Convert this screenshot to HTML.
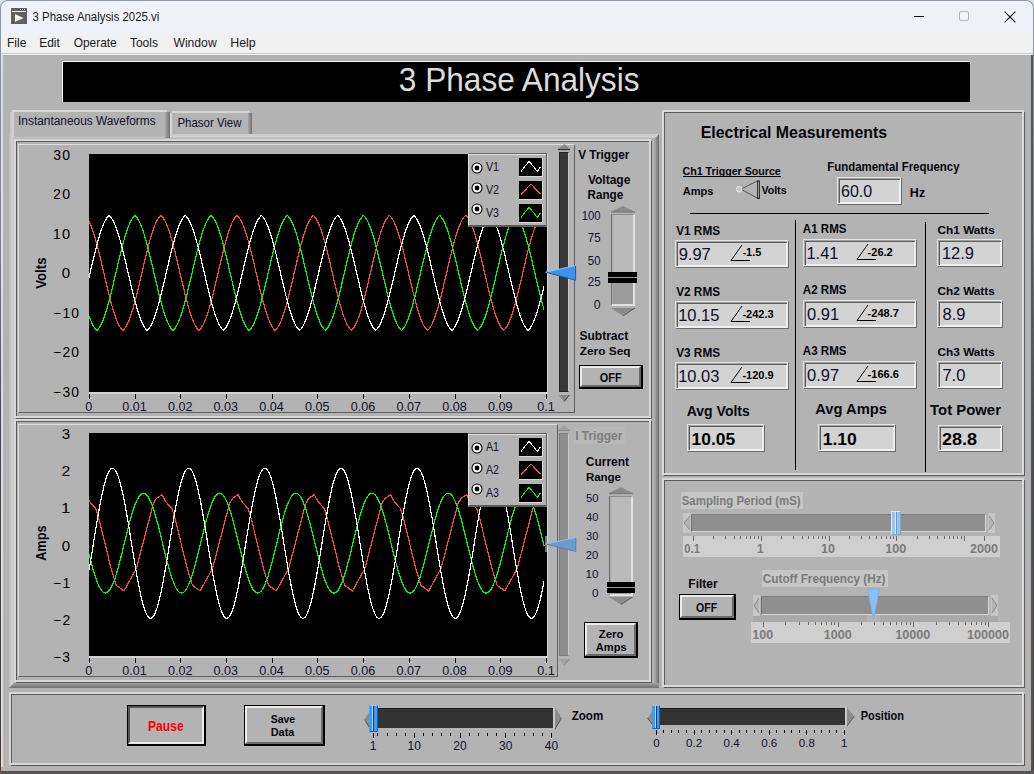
<!DOCTYPE html><html><head><meta charset="utf-8"><style>
html,body{margin:0;padding:0;width:1034px;height:774px;overflow:hidden;background:#6a5646;}
body{position:relative;font-family:"Liberation Sans", sans-serif;}
div{position:absolute;box-sizing:border-box;}
.t{position:absolute;white-space:nowrap;line-height:0;height:0;}
svg{position:absolute;}
</style></head><body><div style="left:0px;top:0px;width:1034px;height:12px;background:#dfe3ea;"></div><div style="left:0px;top:0px;width:1034px;height:773px;background:linear-gradient(#8e98ac 0%,#7a8496 30%,#3c4658 55%,#4a3a30 100%);border-radius:8px 8px 5px 5px;"></div><div style="left:1px;top:1px;width:1032px;height:771px;background:#b3b3b3;border-radius:7px 7px 4px 4px;overflow:hidden;"></div><div style="left:1px;top:1px;width:1032px;height:32px;background:#eff2fa;border-radius:7px 7px 0 0;"></div><div style="left:1px;top:33px;width:1032px;height:20px;background:#f1f1f1;"></div><div style="left:1px;top:53px;width:1032px;height:1px;background:#c4c4c4;"></div><div style="left:1px;top:54px;width:1032px;height:1px;background:#fcfcfc;"></div><div style="left:3px;top:55px;width:1028px;height:1px;background:#ababab;"></div><div style="left:1px;top:55px;width:2px;height:713px;background:#dedede;border-radius:0 0 0 4px;"></div><div style="left:1031px;top:55px;width:2px;height:717px;background:#545454;"></div><div style="left:1px;top:771px;width:1032px;height:2px;background:#545454;border-radius:0 0 4px 4px;"></div><div style="left:1px;top:767px;width:5px;height:4px;background:#b3b3b3;"></div><svg style="left:11px;top:8px" width="16" height="16" viewBox="0 0 16 16">
<rect x="0" y="0" width="16" height="16" fill="#606060"/>
<rect x="1" y="3" width="14" height="1" fill="#f0f0f0"/>
<rect x="9" y="1" width="1" height="1" fill="#f0f0f0"/><rect x="11" y="1" width="1" height="1" fill="#f0f0f0"/><rect x="13" y="1" width="1" height="1" fill="#f0f0f0"/>
<path d="M4 6 L12.5 10 L4 14 Z" fill="#f4f4f4"/>
</svg><div style="left:914px;top:16px;width:10px;height:1px;background:#111;"></div><div style="left:959px;top:11px;width:10px;height:10px;border:1px solid #b4b4b4;border-radius:2px;"></div><svg style="left:1004px;top:11px" width="12" height="12" viewBox="0 0 12 12"><path d="M0.6 0.6 L11.4 11.4 M11.4 0.6 L0.6 11.4" stroke="#111" stroke-width="1.1"/></svg><div style="left:61px;top:60px;width:909px;height:42px;background:#aaaaaa;"></div><div style="left:62px;top:61px;width:908px;height:41px;background:#fafafa;"></div><div style="left:63px;top:62px;width:907px;height:40px;background:#000;"></div><div style="left:9px;top:134px;width:650px;height:554px;background:#b3b3b3;"></div><div style="left:9px;top:134px;width:650px;height:4px;background:linear-gradient(#c8c8c8,#d2d2d2 60%,#c4c4c4);clip-path:polygon(0 0,100% 0,calc(100% - 4px) 100%,0 100%);"></div><div style="left:9px;top:134px;width:5px;height:553px;background:linear-gradient(90deg,#bcbcbc,#d2d2d2 60%,#c4c4c4);"></div><div style="left:654px;top:134px;width:5px;height:553px;background:linear-gradient(90deg,#b0b0b0,#8a8a8a 60%,#666);clip-path:polygon(100% 0,100% 100%,0 100%,0 5px);"></div><div style="left:9px;top:683px;width:650px;height:5px;background:linear-gradient(#a2a2a2,#707070);clip-path:polygon(5px 0,100% 0,100% 100%,0 100%);"></div><div style="left:10px;top:110px;width:160px;height:27px;background:#b3b3b3;border-radius:4px 4px 0 0;"></div><div style="left:12px;top:110px;width:155px;height:2px;background:#d8d8d8;"></div><div style="left:10px;top:112px;width:4px;height:25px;background:linear-gradient(90deg,#c4c4c4,#d4d4d4);"></div><div style="left:165px;top:112px;width:5px;height:26px;background:linear-gradient(90deg,#a8a8a8,#707070);"></div><div style="left:170px;top:111px;width:82px;height:24px;background:#b3b3b3;border-radius:4px 4px 0 0;"></div><div style="left:172px;top:111px;width:77px;height:2px;background:#d6d6d6;"></div><div style="left:170px;top:113px;width:2px;height:21px;background:#d6d6d6;"></div><div style="left:248px;top:113px;width:4px;height:22px;background:linear-gradient(90deg,#a8a8a8,#727272);"></div><div style="left:170px;top:134px;width:489px;height:4px;background:linear-gradient(#c8c8c8,#d2d2d2 60%,#c4c4c4);clip-path:polygon(0 0,100% 0,calc(100% - 4px) 100%,0 100%);"></div><div style="left:16px;top:141px;width:636px;height:278px;border:1px solid #5a5a5a;"></div><div style="left:14px;top:139px;width:637px;height:279px;border:2px solid #d9d9d9;"></div><div style="left:18px;top:144px;width:557px;height:269px;border-top:1px solid #dedede;border-left:1px solid #dedede;border-right:1px solid #5e5e5e;border-bottom:1px solid #5e5e5e;"></div><div style="left:89px;top:154px;width:458px;height:238px;background:#000;"></div><div style="left:89px;top:392px;width:459px;height:2px;background:#d2d2d2;"></div><div style="left:547px;top:154px;width:1px;height:238px;background:#d8d8d8;"></div><div style="left:89px;top:394px;width:1px;height:5px;background:#000;"></div><div style="left:135px;top:394px;width:1px;height:5px;background:#000;"></div><div style="left:180px;top:394px;width:1px;height:5px;background:#000;"></div><div style="left:226px;top:394px;width:1px;height:5px;background:#000;"></div><div style="left:272px;top:394px;width:1px;height:5px;background:#000;"></div><div style="left:317px;top:394px;width:1px;height:5px;background:#000;"></div><div style="left:363px;top:394px;width:1px;height:5px;background:#000;"></div><div style="left:409px;top:394px;width:1px;height:5px;background:#000;"></div><div style="left:455px;top:394px;width:1px;height:5px;background:#000;"></div><div style="left:500px;top:394px;width:1px;height:5px;background:#000;"></div><div style="left:546px;top:394px;width:1px;height:5px;background:#000;"></div><svg style="left:89px;top:154px" width="458" height="238"><polyline fill="none" stroke="#ff4a4a" stroke-width="1.2" shape-rendering="crispEdges" points="0.0,67.29 0.5,68.30 1.0,69.39 1.5,70.54 2.0,71.76 2.5,73.04 3.0,74.38 3.5,75.79 4.0,77.25 4.5,78.77 5.0,80.35 5.5,81.98 6.0,83.65 6.5,85.38 7.0,87.16 7.5,88.97 8.0,90.83 8.5,92.73 9.0,94.67 9.5,96.64 10.0,98.64 10.5,100.66 11.0,102.72 11.5,104.79 12.0,106.89 12.5,109.00 13.0,111.13 13.5,113.27 14.0,115.41 14.5,117.56 15.0,119.71 15.5,121.87 16.0,124.01 16.5,126.15 17.0,128.28 17.5,130.40 18.0,132.50 18.5,134.58 19.0,136.64 19.5,138.67 20.0,140.68 20.5,142.66 21.0,144.60 21.5,146.51 22.0,148.38 22.5,150.21 23.0,151.99 23.5,153.73 24.0,155.42 24.5,157.06 25.0,158.65 25.5,160.18 26.0,161.66 26.5,163.08 27.0,164.44 27.5,165.73 28.0,166.97 28.5,168.14 29.0,169.24 29.5,170.27 30.0,171.24 30.5,172.14 31.0,172.96 31.5,173.72 32.0,174.40 32.5,175.01 33.0,175.55 33.5,176.02 34.0,176.19 34.5,175.75 35.0,175.24 35.5,174.66 36.0,174.01 36.5,173.28 37.0,172.49 37.5,171.62 38.0,170.68 38.5,169.67 39.0,168.60 39.5,167.46 40.0,166.25 40.5,164.98 41.0,163.65 41.5,162.25 42.0,160.80 42.5,159.29 43.0,157.72 43.5,156.10 44.0,154.43 44.5,152.71 45.0,150.95 45.5,149.14 46.0,147.29 46.5,145.39 47.0,143.46 47.5,141.50 48.0,139.51 48.5,137.48 49.0,135.43 49.5,133.36 50.0,131.27 50.5,129.16 51.0,127.03 51.5,124.90 52.0,122.75 52.5,120.60 53.0,118.45 53.5,116.30 54.0,114.15 54.5,112.01 55.0,109.88 55.5,107.76 56.0,105.66 56.5,103.57 57.0,101.51 57.5,99.47 58.0,97.46 58.5,95.48 59.0,93.53 59.5,91.61 60.0,89.74 60.5,87.90 61.0,86.11 61.5,84.36 62.0,82.66 62.5,81.01 63.0,79.42 63.5,77.87 64.0,76.39 64.5,74.96 65.0,73.59 65.5,72.28 66.0,71.04 66.5,69.86 67.0,68.74 67.5,67.70 68.0,66.72 68.5,65.81 69.0,64.97 69.5,64.21 70.0,63.51 70.5,62.89 71.0,62.34 71.5,61.86 72.0,61.55 72.5,61.97 73.0,62.47 73.5,63.03 74.0,63.67 74.5,64.39 75.0,65.17 75.5,66.03 76.0,66.95 76.5,67.95 77.0,69.01 77.5,70.14 78.0,71.34 78.5,72.60 79.0,73.92 79.5,75.30 80.0,76.75 80.5,78.25 81.0,79.81 81.5,81.42 82.0,83.08 82.5,84.79 83.0,86.55 83.5,88.35 84.0,90.20 84.5,92.08 85.0,94.01 85.5,95.96 86.0,97.95 86.5,99.97 87.0,102.02 87.5,104.09 88.0,106.17 88.5,108.28 89.0,110.40 89.5,112.54 90.0,114.68 90.5,116.83 91.0,118.98 91.5,121.13 92.0,123.28 92.5,125.43 93.0,127.56 93.5,129.68 94.0,131.79 94.5,133.87 95.0,135.94 95.5,137.98 96.0,140.00 96.5,141.99 97.0,143.94 97.5,145.86 98.0,147.75 98.5,149.59 99.0,151.39 99.5,153.14 100.0,154.85 100.5,156.51 101.0,158.12 101.5,159.67 102.0,161.16 102.5,162.60 103.0,163.98 103.5,165.30 104.0,166.56 104.5,167.75 105.0,168.87 105.5,169.93 106.0,170.92 106.5,171.84 107.0,172.69 107.5,173.47 108.0,174.18 108.5,174.81 109.0,175.38 109.5,175.87 110.0,176.28 110.5,175.91 111.0,175.42 111.5,174.87 112.0,174.24 112.5,173.54 113.0,172.77 113.5,171.92 114.0,171.01 114.5,170.02 115.0,168.97 115.5,167.85 116.0,166.67 116.5,165.42 117.0,164.11 117.5,162.73 118.0,161.30 118.5,159.81 119.0,158.26 119.5,156.66 120.0,155.01 120.5,153.30 121.0,151.55 121.5,149.76 122.0,147.92 122.5,146.04 123.0,144.12 123.5,142.17 124.0,140.19 124.5,138.17 125.0,136.13 125.5,134.07 126.0,131.98 126.5,129.88 127.0,127.76 127.5,125.63 128.0,123.48 128.5,121.34 129.0,119.18 129.5,117.03 130.0,114.88 130.5,112.74 131.0,110.60 131.5,108.48 132.0,106.37 132.5,104.28 133.0,102.21 133.5,100.16 134.0,98.14 134.5,96.15 135.0,94.19 135.5,92.26 136.0,90.37 136.5,88.52 137.0,86.71 137.5,84.95 138.0,83.24 138.5,81.57 139.0,79.95 139.5,78.39 140.0,76.89 140.5,75.44 141.0,74.05 141.5,72.72 142.0,71.45 142.5,70.25 143.0,69.12 143.5,68.05 144.0,67.04 144.5,66.11 145.0,65.25 145.5,64.46 146.0,63.74 146.5,63.09 147.0,62.52 147.5,62.01 148.0,61.58 148.5,61.82 149.0,62.29 149.5,62.83 150.0,63.45 150.5,64.14 151.0,64.90 151.5,65.73 152.0,66.63 152.5,67.60 153.0,68.64 153.5,69.75 154.0,70.92 154.5,72.16 155.0,73.46 155.5,74.83 156.0,76.25 156.5,77.73 157.0,79.27 157.5,80.86 158.0,82.51 158.5,84.20 159.0,85.94 159.5,87.73 160.0,89.56 160.5,91.44 161.0,93.35 161.5,95.29 162.0,97.27 162.5,99.28 163.0,101.32 163.5,103.38 164.0,105.46 164.5,107.56 165.0,109.68 165.5,111.81 166.0,113.95 166.5,116.10 167.0,118.25 167.5,120.40 168.0,122.55 168.5,124.70 169.0,126.83 169.5,128.96 170.0,131.07 170.5,133.17 171.0,135.24 171.5,137.29 172.0,139.32 172.5,141.32 173.0,143.28 173.5,145.21 174.0,147.11 174.5,148.97 175.0,150.78 175.5,152.55 176.0,154.28 176.5,155.95 177.0,157.58 177.5,159.15 178.0,160.66 178.5,162.12 179.0,163.52 179.5,164.86 180.0,166.14 180.5,167.35 181.0,168.50 181.5,169.58 182.0,170.59 182.5,171.53 183.0,172.41 183.5,173.21 184.0,173.94 184.5,174.60 185.0,175.19 185.5,175.71 186.0,176.15 186.5,176.06 187.0,175.60 187.5,175.07 188.0,174.46 188.5,173.78 189.0,173.04 189.5,172.22 190.0,171.33 190.5,170.37 191.0,169.34 191.5,168.24 192.0,167.08 192.5,165.85 193.0,164.56 193.5,163.21 194.0,161.80 194.5,160.32 195.0,158.79 195.5,157.21 196.0,155.58 196.5,153.89 197.0,152.15 197.5,150.37 198.0,148.55 198.5,146.68 199.0,144.78 199.5,142.84 200.0,140.87 200.5,138.86 201.0,136.83 201.5,134.77 202.0,132.69 202.5,130.59 203.0,128.48 203.5,126.35 204.0,124.21 204.5,122.07 205.0,119.92 205.5,117.76 206.0,115.61 206.5,113.47 207.0,111.33 207.5,109.20 208.0,107.09 208.5,104.99 209.0,102.91 209.5,100.85 210.0,98.82 210.5,96.82 211.0,94.85 211.5,92.91 212.0,91.01 212.5,89.15 213.0,87.32 213.5,85.55 214.0,83.81 214.5,82.13 215.0,80.50 215.5,78.92 216.0,77.39 216.5,75.92 217.0,74.51 217.5,73.16 218.0,71.88 218.5,70.65 219.0,69.49 219.5,68.40 220.0,67.38 220.5,66.42 221.0,65.54 221.5,64.72 222.0,63.97 222.5,63.30 223.0,62.70 223.5,62.18 224.0,61.72 224.5,61.67 225.0,62.12 225.5,62.64 226.0,63.23 226.5,63.90 227.0,64.63 227.5,65.44 228.0,66.32 228.5,67.27 229.0,68.28 229.5,69.37 230.0,70.52 230.5,71.73 231.0,73.01 231.5,74.36 232.0,75.76 232.5,77.22 233.0,78.74 233.5,80.32 234.0,81.94 234.5,83.62 235.0,85.35 235.5,87.12 236.0,88.94 236.5,90.80 237.0,92.69 237.5,94.63 238.0,96.60 238.5,98.60 239.0,100.62 239.5,102.68 240.0,104.75 240.5,106.85 241.0,108.96 241.5,111.09 242.0,113.22 242.5,115.37 243.0,117.52 243.5,119.67 244.0,121.82 244.5,123.97 245.0,126.11 245.5,128.24 246.0,130.36 246.5,132.46 247.0,134.54 247.5,136.60 248.0,138.63 248.5,140.64 249.0,142.62 249.5,144.56 250.0,146.47 250.5,148.34 251.0,150.17 251.5,151.96 252.0,153.70 252.5,155.39 253.0,157.03 253.5,158.62 254.0,160.15 254.5,161.63 255.0,163.05 255.5,164.41 256.0,165.71 256.5,166.94 257.0,168.11 257.5,169.22 258.0,170.25 258.5,171.22 259.0,172.12 259.5,172.95 260.0,173.70 260.5,174.39 261.0,175.00 261.5,175.54 262.0,176.01 262.5,176.19 263.0,175.76 263.5,175.25 264.0,174.67 264.5,174.02 265.0,173.30 265.5,172.50 266.0,171.64 266.5,170.70 267.0,169.70 267.5,168.62 268.0,167.48 268.5,166.28 269.0,165.01 269.5,163.68 270.0,162.28 270.5,160.83 271.0,159.32 271.5,157.76 272.0,156.14 272.5,154.47 273.0,152.75 273.5,150.98 274.0,149.17 274.5,147.32 275.0,145.43 275.5,143.50 276.0,141.54 276.5,139.55 277.0,137.52 277.5,135.47 278.0,133.40 278.5,131.31 279.0,129.20 279.5,127.08 280.0,124.94 280.5,122.80 281.0,120.65 281.5,118.49 282.0,116.34 282.5,114.20 283.0,112.05 283.5,109.92 284.0,107.80 284.5,105.70 285.0,103.61 285.5,101.55 286.0,99.51 286.5,97.50 287.0,95.52 287.5,93.57 288.0,91.65 288.5,89.77 289.0,87.94 289.5,86.15 290.0,84.40 290.5,82.70 291.0,81.05 291.5,79.45 292.0,77.90 292.5,76.42 293.0,74.99 293.5,73.62 294.0,72.31 294.5,71.06 295.0,69.88 295.5,68.77 296.0,67.72 296.5,66.74 297.0,65.83 297.5,64.99 298.0,64.22 298.5,63.52 299.0,62.90 299.5,62.35 300.0,61.87 300.5,61.54 301.0,61.96 301.5,62.45 302.0,63.02 302.5,63.66 303.0,64.37 303.5,65.16 304.0,66.01 304.5,66.94 305.0,67.93 305.5,68.99 306.0,70.12 306.5,71.31 307.0,72.57 307.5,73.89 308.0,75.28 308.5,76.72 309.0,78.22 309.5,79.77 310.0,81.38 310.5,83.04 311.0,84.75 311.5,86.51 312.0,88.31 312.5,90.16 313.0,92.04 313.5,93.97 314.0,95.92 314.5,97.91 315.0,99.93 315.5,101.98 316.0,104.04 316.5,106.13 317.0,108.24 317.5,110.36 318.0,112.50 318.5,114.64 319.0,116.79 319.5,118.94 320.0,121.09 320.5,123.24 321.0,125.38 321.5,127.52 322.0,129.64 322.5,131.74 323.0,133.83 323.5,135.90 324.0,137.94 324.5,139.96 325.0,141.95 325.5,143.90 326.0,145.83 326.5,147.71 327.0,149.55 327.5,151.35 328.0,153.11 328.5,154.82 329.0,156.48 329.5,158.08 330.0,159.64 330.5,161.14 331.0,162.58 331.5,163.96 332.0,165.27 332.5,166.53 333.0,167.72 333.5,168.85 334.0,169.91 334.5,170.90 335.0,171.82 335.5,172.67 336.0,173.45 336.5,174.16 337.0,174.80 337.5,175.37 338.0,175.86 338.5,176.27 339.0,175.92 339.5,175.43 340.0,174.88 340.5,174.25 341.0,173.55 341.5,172.78 342.0,171.94 342.5,171.03 343.0,170.04 343.5,168.99 344.0,167.88 344.5,166.69 345.0,165.45 345.5,164.13 346.0,162.76 346.5,161.33 347.0,159.84 347.5,158.29 348.0,156.69 348.5,155.04 349.0,153.34 349.5,151.59 350.0,149.79 350.5,147.96 351.0,146.08 351.5,144.16 352.0,142.21 352.5,140.23 353.0,138.21 353.5,136.17 354.0,134.11 354.5,132.02 355.0,129.92 355.5,127.80 356.0,125.67 356.5,123.53 357.0,121.38 357.5,119.23 358.0,117.07 358.5,114.92 359.0,112.78 359.5,110.65 360.0,108.52 360.5,106.41 361.0,104.32 361.5,102.25 362.0,100.20 362.5,98.18 363.0,96.19 363.5,94.23 364.0,92.30 364.5,90.41 365.0,88.56 365.5,86.75 366.0,84.99 366.5,83.27 367.0,81.60 367.5,79.99 368.0,78.42 368.5,76.92 369.0,75.47 369.5,74.07 370.0,72.75 370.5,71.48 371.0,70.27 371.5,69.14 372.0,68.07 372.5,67.06 373.0,66.13 373.5,65.27 374.0,64.47 374.5,63.75 375.0,63.10 375.5,62.53 376.0,62.02 376.5,61.59 377.0,61.81 377.5,62.28 378.0,62.82 378.5,63.44 379.0,64.12 379.5,64.88 380.0,65.71 380.5,66.61 381.0,67.58 381.5,68.62 382.0,69.73 382.5,70.90 383.0,72.14 383.5,73.44 384.0,74.80 384.5,76.22 385.0,77.70 385.5,79.24 386.0,80.83 386.5,82.47 387.0,84.17 387.5,85.91 388.0,87.70 388.5,89.53 389.0,91.40 389.5,93.31 390.0,95.25 390.5,97.23 391.0,99.24 391.5,101.28 392.0,103.34 392.5,105.42 393.0,107.52 393.5,109.64 394.0,111.77 394.5,113.91 395.0,116.06 395.5,118.21 396.0,120.36 396.5,122.51 397.0,124.66 397.5,126.79 398.0,128.92 398.5,131.03 399.0,133.12 399.5,135.20 400.0,137.25 400.5,139.28 401.0,141.28 401.5,143.24 402.0,145.18 402.5,147.07 403.0,148.93 403.5,150.75 404.0,152.52 404.5,154.24 405.0,155.92 405.5,157.54 406.0,159.12 406.5,160.63 407.0,162.09 407.5,163.49 408.0,164.83 408.5,166.11 409.0,167.33 409.5,168.47 410.0,169.56 410.5,170.57 411.0,171.52 411.5,172.39 412.0,173.20 412.5,173.93 413.0,174.59 413.5,175.18 414.0,175.70 414.5,176.14 415.0,176.06 415.5,175.61 416.0,175.08 416.5,174.47 417.0,173.80 417.5,173.05 418.0,172.23 418.5,171.34 419.0,170.39 419.5,169.36 420.0,168.26 420.5,167.10 421.0,165.88 421.5,164.59 422.0,163.24 422.5,161.82 423.0,160.35 423.5,158.83 424.0,157.24 424.5,155.61 425.0,153.92 425.5,152.19 426.0,150.41 426.5,148.59 427.0,146.72 427.5,144.82 428.0,142.88 428.5,140.91 429.0,138.90 429.5,136.87 430.0,134.81 430.5,132.74 431.0,130.64 431.5,128.52 432.0,126.39 432.5,124.26 433.0,122.11 433.5,119.96 434.0,117.81 434.5,115.66 435.0,113.51 435.5,111.37 436.0,109.24 436.5,107.13 437.0,105.03 437.5,102.95 438.0,100.90 438.5,98.86 439.0,96.86 439.5,94.89 440.0,92.95 440.5,91.05 441.0,89.18 441.5,87.36 442.0,85.58 442.5,83.85 443.0,82.16 443.5,80.53 444.0,78.95 444.5,77.42 445.0,75.95 445.5,74.54 446.0,73.19 446.5,71.90 447.0,70.68 447.5,69.52 448.0,68.42 448.5,67.40 449.0,66.44 449.5,65.55 450.0,64.73 450.5,63.99 451.0,63.32 451.5,62.71 452.0,62.19 452.5,61.73 453.0,61.67 453.5,62.11 454.0,62.63 454.5,63.22 455.0,63.88"/><polyline fill="none" stroke="#00ff00" stroke-width="1.2" shape-rendering="crispEdges" points="0.0,161.73 0.5,163.15 1.0,164.50 1.5,165.80 2.0,167.03 2.5,168.19 3.0,169.29 3.5,170.32 4.0,171.29 4.5,172.18 5.0,173.00 5.5,173.75 6.0,174.43 6.5,175.04 7.0,175.58 7.5,176.04 8.0,176.17 8.5,175.73 9.0,175.22 9.5,174.63 10.0,173.97 10.5,173.25 11.0,172.45 11.5,171.57 12.0,170.63 12.5,169.62 13.0,168.54 13.5,167.40 14.0,166.19 14.5,164.92 15.0,163.58 15.5,162.18 16.0,160.73 16.5,159.21 17.0,157.65 17.5,156.02 18.0,154.35 18.5,152.63 19.0,150.86 19.5,149.05 20.0,147.19 20.5,145.30 21.0,143.37 21.5,141.40 22.0,139.41 22.5,137.38 23.0,135.33 23.5,133.26 24.0,131.16 24.5,129.05 25.0,126.93 25.5,124.79 26.0,122.65 26.5,120.50 27.0,118.35 27.5,116.19 28.0,114.05 28.5,111.91 29.0,109.77 29.5,107.66 30.0,105.55 30.5,103.47 31.0,101.41 31.5,99.37 32.0,97.36 32.5,95.38 33.0,93.43 33.5,91.52 34.0,89.65 34.5,87.81 35.0,86.02 35.5,84.28 36.0,82.58 36.5,80.93 37.0,79.34 37.5,77.80 38.0,76.31 38.5,74.89 39.0,73.52 39.5,72.22 40.0,70.98 40.5,69.80 41.0,68.69 41.5,67.65 42.0,66.67 42.5,65.77 43.0,64.93 43.5,64.17 44.0,63.48 44.5,62.86 45.0,62.31 45.5,61.84 46.0,61.57 46.5,61.99 47.0,62.49 47.5,63.06 48.0,63.71 48.5,64.43 49.0,65.21 49.5,66.07 50.0,67.00 50.5,68.00 51.0,69.07 51.5,70.20 52.0,71.40 52.5,72.66 53.0,73.99 53.5,75.38 54.0,76.82 54.5,78.32 55.0,79.88 55.5,81.50 56.0,83.16 56.5,84.88 57.0,86.64 57.5,88.44 58.0,90.29 58.5,92.18 59.0,94.10 59.5,96.06 60.0,98.05 60.5,100.07 61.0,102.12 61.5,104.19 62.0,106.28 62.5,108.39 63.0,110.51 63.5,112.64 64.0,114.79 64.5,116.94 65.0,119.09 65.5,121.24 66.0,123.39 66.5,125.53 67.0,127.66 67.5,129.78 68.0,131.89 68.5,133.98 69.0,136.04 69.5,138.09 70.0,140.10 70.5,142.09 71.0,144.04 71.5,145.96 72.0,147.84 72.5,149.68 73.0,151.48 73.5,153.23 74.0,154.93 74.5,156.59 75.0,158.19 75.5,159.74 76.0,161.24 76.5,162.67 77.0,164.05 77.5,165.36 78.0,166.62 78.5,167.80 79.0,168.93 79.5,169.98 80.0,170.97 80.5,171.88 81.0,172.73 81.5,173.51 82.0,174.21 82.5,174.84 83.0,175.40 83.5,175.89 84.0,176.30 84.5,175.89 85.0,175.40 85.5,174.84 86.0,174.21 86.5,173.50 87.0,172.73 87.5,171.88 88.0,170.96 88.5,169.97 89.0,168.92 89.5,167.80 90.0,166.61 90.5,165.36 91.0,164.04 91.5,162.66 92.0,161.23 92.5,159.73 93.0,158.18 93.5,156.58 94.0,154.92 94.5,153.22 95.0,151.47 95.5,149.67 96.0,147.83 96.5,145.95 97.0,144.03 97.5,142.07 98.0,140.09 98.5,138.07 99.0,136.03 99.5,133.97 100.0,131.88 100.5,129.77 101.0,127.65 101.5,125.52 102.0,123.38 102.5,121.23 103.0,119.08 103.5,116.92 104.0,114.78 104.5,112.63 105.0,110.50 105.5,108.37 106.0,106.27 106.5,104.18 107.0,102.11 107.5,100.06 108.0,98.04 108.5,96.05 109.0,94.09 109.5,92.17 110.0,90.28 110.5,88.43 111.0,86.63 111.5,84.87 112.0,83.15 112.5,81.49 113.0,79.88 113.5,78.32 114.0,76.81 114.5,75.37 115.0,73.98 115.5,72.66 116.0,71.39 116.5,70.19 117.0,69.06 117.5,67.99 118.0,67.00 118.5,66.07 119.0,65.21 119.5,64.42 120.0,63.70 120.5,63.06 121.0,62.49 121.5,61.99 122.0,61.56 122.5,61.84 123.0,62.31 123.5,62.86 124.0,63.48 124.5,64.17 125.0,64.94 125.5,65.77 126.0,66.68 126.5,67.65 127.0,68.70 127.5,69.81 128.0,70.98 128.5,72.23 129.0,73.53 129.5,74.90 130.0,76.32 130.5,77.81 131.0,79.35 131.5,80.94 132.0,82.59 132.5,84.29 133.0,86.03 133.5,87.82 134.0,89.66 134.5,91.53 135.0,93.44 135.5,95.39 136.0,97.37 136.5,99.38 137.0,101.42 137.5,103.48 138.0,105.57 138.5,107.67 139.0,109.79 139.5,111.92 140.0,114.06 140.5,116.21 141.0,118.36 141.5,120.51 142.0,122.66 142.5,124.80 143.0,126.94 143.5,129.07 144.0,131.18 144.5,133.27 145.0,135.34 145.5,137.39 146.0,139.42 146.5,141.41 147.0,143.38 147.5,145.31 148.0,147.20 148.5,149.06 149.0,150.87 149.5,152.64 150.0,154.36 150.5,156.03 151.0,157.65 151.5,159.22 152.0,160.74 152.5,162.19 153.0,163.59 153.5,164.92 154.0,166.20 154.5,167.41 155.0,168.55 155.5,169.63 156.0,170.64 156.5,171.58 157.0,172.45 157.5,173.25 158.0,173.98 158.5,174.64 159.0,175.22 159.5,175.73 160.0,176.17 160.5,176.03 161.0,175.57 161.5,175.04 162.0,174.43 162.5,173.75 163.0,173.00 163.5,172.17 164.0,171.28 164.5,170.32 165.0,169.29 165.5,168.19 166.0,167.02 166.5,165.79 167.0,164.50 167.5,163.14 168.0,161.72 168.5,160.25 169.0,158.72 169.5,157.13 170.0,155.49 170.5,153.80 171.0,152.07 171.5,150.28 172.0,148.46 172.5,146.59 173.0,144.68 173.5,142.74 174.0,140.77 174.5,138.76 175.0,136.73 175.5,134.67 176.0,132.59 176.5,130.49 177.0,128.37 177.5,126.25 178.0,124.11 178.5,121.96 179.0,119.81 179.5,117.66 180.0,115.51 180.5,113.36 181.0,111.22 181.5,109.10 182.0,106.98 182.5,104.88 183.0,102.81 183.5,100.75 184.0,98.72 184.5,96.72 185.0,94.75 185.5,92.82 186.0,90.92 186.5,89.05 187.0,87.23 187.5,85.46 188.0,83.73 188.5,82.05 189.0,80.42 189.5,78.84 190.0,77.32 190.5,75.85 191.0,74.45 191.5,73.10 192.0,71.81 192.5,70.59 193.0,69.44 193.5,68.35 194.0,67.33 194.5,66.38 195.0,65.49 195.5,64.68 196.0,63.94 196.5,63.27 197.0,62.67 197.5,62.15 198.0,61.70 198.5,61.69 199.0,62.14 199.5,62.67 200.0,63.26 200.5,63.93 201.0,64.67 201.5,65.48 202.0,66.36 202.5,67.31 203.0,68.33 203.5,69.42 204.0,70.58 204.5,71.80 205.0,73.08 205.5,74.43 206.0,75.83 206.5,77.30 207.0,78.82 207.5,80.39 208.0,82.02 208.5,83.70 209.0,85.43 209.5,87.21 210.0,89.03 210.5,90.89 211.0,92.79 211.5,94.72 212.0,96.69 212.5,98.69 213.0,100.72 213.5,102.78 214.0,104.85 214.5,106.95 215.0,109.06 215.5,111.19 216.0,113.33 216.5,115.48 217.0,117.63 217.5,119.78 218.0,121.93 218.5,124.08 219.0,126.21 219.5,128.34 220.0,130.46 220.5,132.56 221.0,134.64 221.5,136.70 222.0,138.73 222.5,140.74 223.0,142.71 223.5,144.66 224.0,146.56 224.5,148.43 225.0,150.26 225.5,152.04 226.0,153.78 226.5,155.47 227.0,157.11 227.5,158.70 228.0,160.23 228.5,161.70 229.0,163.12 229.5,164.48 230.0,165.77 230.5,167.00 231.0,168.17 231.5,169.27 232.0,170.30 232.5,171.27 233.0,172.16 233.5,172.99 234.0,173.74 234.5,174.42 235.0,175.03 235.5,175.57 236.0,176.03 236.5,176.17 237.0,175.74 237.5,175.23 238.0,174.64 238.5,173.99 239.0,173.26 239.5,172.46 240.0,171.59 240.5,170.65 241.0,169.64 241.5,168.57 242.0,167.42 242.5,166.22 243.0,164.94 243.5,163.61 244.0,162.21 244.5,160.76 245.0,159.24 245.5,157.68 246.0,156.06 246.5,154.38 247.0,152.66 247.5,150.90 248.0,149.08 248.5,147.23 249.0,145.34 249.5,143.41 250.0,141.44 250.5,139.45 251.0,137.42 251.5,135.37 252.0,133.30 252.5,131.21 253.0,129.10 253.5,126.97 254.0,124.83 254.5,122.69 255.0,120.54 255.5,118.39 256.0,116.24 256.5,114.09 257.0,111.95 257.5,109.82 258.0,107.70 258.5,105.60 259.0,103.51 259.5,101.45 260.0,99.41 260.5,97.40 261.0,95.42 261.5,93.47 262.0,91.56 262.5,89.68 263.0,87.85 263.5,86.06 264.0,84.31 264.5,82.61 265.0,80.97 265.5,79.37 266.0,77.83 266.5,76.34 267.0,74.92 267.5,73.55 268.0,72.24 268.5,71.00 269.0,69.82 269.5,68.71 270.0,67.67 270.5,66.69 271.0,65.79 271.5,64.95 272.0,64.18 272.5,63.49 273.0,62.87 273.5,62.32 274.0,61.85 274.5,61.56 275.0,61.98 275.5,62.48 276.0,63.05 276.5,63.69 277.0,64.41 277.5,65.20 278.0,66.05 278.5,66.98 279.0,67.98 279.5,69.05 280.0,70.18 280.5,71.37 281.0,72.64 281.5,73.96 282.0,75.35 282.5,76.79 283.0,78.29 283.5,79.85 284.0,81.46 284.5,83.13 285.0,84.84 285.5,86.60 286.0,88.41 286.5,90.25 287.0,92.14 287.5,94.06 288.0,96.02 288.5,98.01 289.0,100.03 289.5,102.08 290.0,104.15 290.5,106.24 291.0,108.34 291.5,110.47 292.0,112.60 292.5,114.74 293.0,116.89 293.5,119.05 294.0,121.20 294.5,123.35 295.0,125.49 295.5,127.62 296.0,129.74 296.5,131.85 297.0,133.94 297.5,136.00 298.0,138.04 298.5,140.06 299.0,142.05 299.5,144.00 300.0,145.92 300.5,147.80 301.0,149.64 301.5,151.44 302.0,153.19 302.5,154.90 303.0,156.56 303.5,158.16 304.0,159.71 304.5,161.21 305.0,162.64 305.5,164.02 306.0,165.34 306.5,166.59 307.0,167.78 307.5,168.90 308.0,169.96 308.5,170.95 309.0,171.87 309.5,172.71 310.0,173.49 310.5,174.20 311.0,174.83 311.5,175.39 312.0,175.88 312.5,176.29 313.0,175.89 313.5,175.41 314.0,174.85 314.5,174.22 315.0,173.52 315.5,172.74 316.0,171.90 316.5,170.98 317.0,169.99 317.5,168.94 318.0,167.82 318.5,166.63 319.0,165.38 319.5,164.07 320.0,162.69 320.5,161.26 321.0,159.77 321.5,158.22 322.0,156.61 322.5,154.96 323.0,153.25 323.5,151.50 324.0,149.70 324.5,147.86 325.0,145.98 325.5,144.07 326.0,142.11 326.5,140.13 327.0,138.11 327.5,136.07 328.0,134.01 328.5,131.92 329.0,129.82 329.5,127.69 330.0,125.56 330.5,123.42 331.0,121.27 331.5,119.12 332.0,116.97 332.5,114.82 333.0,112.68 333.5,110.54 334.0,108.42 334.5,106.31 335.0,104.22 335.5,102.15 336.0,100.10 336.5,98.08 337.0,96.09 337.5,94.13 338.0,92.20 338.5,90.32 339.0,88.47 339.5,86.66 340.0,84.90 340.5,83.19 341.0,81.52 341.5,79.91 342.0,78.35 342.5,76.84 343.0,75.40 343.5,74.01 344.0,72.68 344.5,71.42 345.0,70.22 345.5,69.08 346.0,68.02 346.5,67.02 347.0,66.09 347.5,65.23 348.0,64.44 348.5,63.72 349.0,63.07 349.5,62.50 350.0,62.00 350.5,61.57 351.0,61.83 351.5,62.30 352.0,62.85 352.5,63.47 353.0,64.16 353.5,64.92 354.0,65.76 354.5,66.66 355.0,67.63 355.5,68.68 356.0,69.78 356.5,70.96 357.0,72.20 357.5,73.50 358.0,74.87 358.5,76.29 359.0,77.78 359.5,79.32 360.0,80.91 360.5,82.56 361.0,84.25 361.5,86.00 362.0,87.79 362.5,89.62 363.0,91.49 363.5,93.40 364.0,95.35 364.5,97.33 365.0,99.34 365.5,101.38 366.0,103.44 366.5,105.52 367.0,107.63 367.5,109.74 368.0,111.87 368.5,114.02 369.0,116.16 369.5,118.31 370.0,120.47 370.5,122.62 371.0,124.76 371.5,126.90 372.0,129.02 372.5,131.13 373.0,133.23 373.5,135.30 374.0,137.35 374.5,139.38 375.0,141.37 375.5,143.34 376.0,145.27 376.5,147.17 377.0,149.02 377.5,150.83 378.0,152.60 378.5,154.33 379.0,156.00 379.5,157.62 380.0,159.19 380.5,160.71 381.0,162.16 381.5,163.56 382.0,164.90 382.5,166.17 383.0,167.38 383.5,168.53 384.0,169.61 384.5,170.62 385.0,171.56 385.5,172.43 386.0,173.23 386.5,173.96 387.0,174.62 387.5,175.21 388.0,175.72 388.5,176.16 389.0,176.04 389.5,175.58 390.0,175.05 390.5,174.44 391.0,173.76 391.5,173.01 392.0,172.19 392.5,171.30 393.0,170.34 393.5,169.31 394.0,168.21 394.5,167.04 395.0,165.81 395.5,164.52 396.0,163.17 396.5,161.75 397.0,160.28 397.5,158.75 398.0,157.16 398.5,155.53 399.0,153.84 399.5,152.10 400.0,150.32 400.5,148.50 401.0,146.63 401.5,144.72 402.0,142.78 402.5,140.81 403.0,138.80 403.5,136.77 404.0,134.71 404.5,132.63 405.0,130.53 405.5,128.42 406.0,126.29 406.5,124.15 407.0,122.00 407.5,119.85 408.0,117.70 408.5,115.55 409.0,113.40 409.5,111.26 410.0,109.14 410.5,107.02 411.0,104.93 411.5,102.85 412.0,100.79 412.5,98.76 413.0,96.76 413.5,94.79 414.0,92.85 414.5,90.95 415.0,89.09 415.5,87.27 416.0,85.49 416.5,83.76 417.0,82.08 417.5,80.45 418.0,78.87 418.5,77.35 419.0,75.88 419.5,74.47 420.0,73.13 420.5,71.84 421.0,70.62 421.5,69.46 422.0,68.37 422.5,67.35 423.0,66.39 423.5,65.51 424.0,64.70 424.5,63.95 425.0,63.28 425.5,62.69 426.0,62.16 426.5,61.71 427.0,61.69 427.5,62.13 428.0,62.66 428.5,63.25 429.0,63.92 429.5,64.65 430.0,65.46 430.5,66.34 431.0,67.29 431.5,68.31 432.0,69.40 432.5,70.55 433.0,71.77 433.5,73.05 434.0,74.40 434.5,75.80 435.0,77.27 435.5,78.79 436.0,80.36 436.5,81.99 437.0,83.67 437.5,85.40 438.0,87.17 438.5,88.99 439.0,90.85 439.5,92.75 440.0,94.69 440.5,96.65 441.0,98.65 441.5,100.68 442.0,102.74 442.5,104.81 443.0,106.91 443.5,109.02 444.0,111.15 444.5,113.29 445.0,115.43 445.5,117.58 446.0,119.73 446.5,121.89 447.0,124.03 447.5,126.17 448.0,128.30 448.5,130.42 449.0,132.52 449.5,134.60 450.0,136.66 450.5,138.69 451.0,140.70 451.5,142.68 452.0,144.62 452.5,146.53 453.0,148.39 453.5,150.22 454.0,152.01 454.5,153.75 455.0,155.44"/><polyline fill="none" stroke="#ffffff" stroke-width="1.2" shape-rendering="crispEdges" points="0.0,123.45 0.5,121.30 1.0,119.15 1.5,117.00 2.0,114.85 2.5,112.70 3.0,110.57 3.5,108.45 4.0,106.34 4.5,104.25 5.0,102.18 5.5,100.13 6.0,98.11 6.5,96.12 7.0,94.16 7.5,92.23 8.0,90.34 8.5,88.49 9.0,86.69 9.5,84.92 10.0,83.21 10.5,81.54 11.0,79.93 11.5,78.37 12.0,76.86 12.5,75.41 13.0,74.03 13.5,72.70 14.0,71.43 14.5,70.23 15.0,69.10 15.5,68.03 16.0,67.03 16.5,66.10 17.0,65.24 17.5,64.45 18.0,63.73 18.5,63.08 19.0,62.51 19.5,62.01 20.0,61.58 20.5,61.82 21.0,62.30 21.5,62.84 22.0,63.46 22.5,64.15 23.0,64.91 23.5,65.74 24.0,66.65 24.5,67.62 25.0,68.66 25.5,69.77 26.0,70.94 26.5,72.18 27.0,73.49 27.5,74.85 28.0,76.27 28.5,77.76 29.0,79.30 29.5,80.89 30.0,82.53 30.5,84.23 31.0,85.97 31.5,87.76 32.0,89.59 32.5,91.47 33.0,93.38 33.5,95.32 34.0,97.30 34.5,99.31 35.0,101.35 35.5,103.41 36.0,105.50 36.5,107.60 37.0,109.71 37.5,111.85 38.0,113.99 38.5,116.13 39.0,118.28 39.5,120.44 40.0,122.59 40.5,124.73 41.0,126.87 41.5,128.99 42.0,131.11 42.5,133.20 43.0,135.27 43.5,137.33 44.0,139.35 44.5,141.35 45.0,143.31 45.5,145.25 46.0,147.14 46.5,149.00 47.0,150.81 47.5,152.58 48.0,154.30 48.5,155.98 49.0,157.60 49.5,159.17 50.0,160.69 50.5,162.14 51.0,163.54 51.5,164.88 52.0,166.16 52.5,167.37 53.0,168.51 53.5,169.59 54.0,170.61 54.5,171.55 55.0,172.42 55.5,173.22 56.0,173.96 56.5,174.61 57.0,175.20 57.5,175.71 58.0,176.16 58.5,176.05 59.0,175.59 59.5,175.06 60.0,174.45 60.5,173.77 61.0,173.02 61.5,172.20 62.0,171.31 62.5,170.35 63.0,169.32 63.5,168.22 64.0,167.06 64.5,165.83 65.0,164.54 65.5,163.19 66.0,161.77 66.5,160.30 67.0,158.77 67.5,157.19 68.0,155.55 68.5,153.86 69.0,152.13 69.5,150.35 70.0,148.52 70.5,146.65 71.0,144.75 71.5,142.81 72.0,140.83 72.5,138.83 73.0,136.80 73.5,134.74 74.0,132.66 74.5,130.56 75.0,128.45 75.5,126.32 76.0,124.18 76.5,122.03 77.0,119.88 77.5,117.73 78.0,115.58 78.5,113.43 79.0,111.29 79.5,109.17 80.0,107.05 80.5,104.96 81.0,102.88 81.5,100.82 82.0,98.79 82.5,96.79 83.0,94.82 83.5,92.88 84.0,90.98 84.5,89.12 85.0,87.30 85.5,85.52 86.0,83.79 86.5,82.10 87.0,80.47 87.5,78.89 88.0,77.37 88.5,75.90 89.0,74.49 89.5,73.14 90.0,71.86 90.5,70.63 91.0,69.48 91.5,68.39 92.0,67.36 92.5,66.41 93.0,65.52 93.5,64.71 94.0,63.96 94.5,63.29 95.0,62.69 95.5,62.17 96.0,61.71 96.5,61.68 97.0,62.13 97.5,62.65 98.0,63.24 98.5,63.91 99.0,64.64 99.5,65.45 100.0,66.33 100.5,67.28 101.0,68.30 101.5,69.38 102.0,70.54 102.5,71.75 103.0,73.04 103.5,74.38 104.0,75.78 104.5,77.25 105.0,78.77 105.5,80.34 106.0,81.97 106.5,83.65 107.0,85.37 107.5,87.15 108.0,88.97 108.5,90.83 109.0,92.72 109.5,94.66 110.0,96.63 110.5,98.63 111.0,100.66 111.5,102.71 112.0,104.78 112.5,106.88 113.0,108.99 113.5,111.12 114.0,113.26 114.5,115.40 115.0,117.55 115.5,119.71 116.0,121.86 116.5,124.00 117.0,126.14 117.5,128.27 118.0,130.39 118.5,132.49 119.0,134.57 119.5,136.63 120.0,138.67 120.5,140.67 121.0,142.65 121.5,144.59 122.0,146.50 122.5,148.37 123.0,150.20 123.5,151.98 124.0,153.72 124.5,155.41 125.0,157.05 125.5,158.64 126.0,160.18 126.5,161.65 127.0,163.07 127.5,164.43 128.0,165.73 128.5,166.96 129.0,168.13 129.5,169.23 130.0,170.27 130.5,171.24 131.0,172.13 131.5,172.96 132.0,173.71 132.5,174.40 133.0,175.01 133.5,175.55 134.0,176.01 134.5,176.19 135.0,175.75 135.5,175.25 136.0,174.67 136.5,174.01 137.0,173.29 137.5,172.49 138.0,171.62 138.5,170.69 139.0,169.68 139.5,168.60 140.0,167.46 140.5,166.26 141.0,164.99 141.5,163.65 142.0,162.26 142.5,160.81 143.0,159.30 143.5,157.73 144.0,156.11 144.5,154.44 145.0,152.72 145.5,150.96 146.0,149.15 146.5,147.29 147.0,145.40 147.5,143.47 148.0,141.51 148.5,139.51 149.0,137.49 149.5,135.44 150.0,133.37 150.5,131.28 151.0,129.17 151.5,127.04 152.0,124.91 152.5,122.76 153.0,120.61 153.5,118.46 154.0,116.31 154.5,114.16 155.0,112.02 155.5,109.89 156.0,107.77 156.5,105.67 157.0,103.58 157.5,101.52 158.0,99.48 158.5,97.47 159.0,95.49 159.5,93.54 160.0,91.62 160.5,89.75 161.0,87.91 161.5,86.12 162.0,84.37 162.5,82.67 163.0,81.02 163.5,79.42 164.0,77.88 164.5,76.39 165.0,74.96 165.5,73.59 166.0,72.29 166.5,71.04 167.0,69.86 167.5,68.75 168.0,67.70 168.5,66.72 169.0,65.81 169.5,64.98 170.0,64.21 170.5,63.51 171.0,62.89 171.5,62.34 172.0,61.86 172.5,61.55 173.0,61.97 173.5,62.46 174.0,63.03 174.5,63.67 175.0,64.38 175.5,65.17 176.0,66.02 176.5,66.95 177.0,67.95 177.5,69.01 178.0,70.14 178.5,71.33 179.0,72.59 179.5,73.92 180.0,75.30 180.5,76.74 181.0,78.24 181.5,79.80 182.0,81.41 182.5,83.07 183.0,84.78 183.5,86.54 184.0,88.34 184.5,90.19 185.0,92.07 185.5,94.00 186.0,95.95 186.5,97.94 187.0,99.96 187.5,102.01 188.0,104.08 188.5,106.17 189.0,108.27 189.5,110.40 190.0,112.53 190.5,114.67 191.0,116.82 191.5,118.97 192.0,121.13 192.5,123.27 193.0,125.42 193.5,127.55 194.0,129.67 194.5,131.78 195.0,133.87 195.5,135.93 196.0,137.98 196.5,139.99 197.0,141.98 197.5,143.94 198.0,145.86 198.5,147.74 199.0,149.58 199.5,151.38 200.0,153.14 200.5,154.84 201.0,156.50 201.5,158.11 202.0,159.66 202.5,161.16 203.0,162.60 203.5,163.98 204.0,165.30 204.5,166.55 205.0,167.74 205.5,168.87 206.0,169.92 206.5,170.91 207.0,171.84 207.5,172.69 208.0,173.47 208.5,174.17 209.0,174.81 209.5,175.37 210.0,175.86 210.5,176.28 211.0,175.91 211.5,175.43 212.0,174.87 212.5,174.24 213.0,173.54 213.5,172.77 214.0,171.93 214.5,171.01 215.0,170.03 215.5,168.98 216.0,167.86 216.5,166.67 217.0,165.43 217.5,164.11 218.0,162.74 218.5,161.31 219.0,159.82 219.5,158.27 220.0,156.67 220.5,155.01 221.0,153.31 221.5,151.56 222.0,149.77 222.5,147.93 223.0,146.05 223.5,144.13 224.0,142.18 224.5,140.20 225.0,138.18 225.5,136.14 226.0,134.08 226.5,131.99 227.0,129.89 227.5,127.77 228.0,125.63 228.5,123.49 229.0,121.34 229.5,119.19 230.0,117.04 230.5,114.89 231.0,112.75 231.5,110.61 232.0,108.49 232.5,106.38 233.0,104.29 233.5,102.22 234.0,100.17 234.5,98.15 235.0,96.16 235.5,94.19 236.0,92.27 236.5,90.38 237.0,88.53 237.5,86.72 238.0,84.96 238.5,83.24 239.0,81.58 239.5,79.96 240.0,78.40 240.5,76.89 241.0,75.44 241.5,74.05 242.0,72.72 242.5,71.46 243.0,70.26 243.5,69.12 244.0,68.05 244.5,67.05 245.0,66.12 245.5,65.25 246.0,64.46 246.5,63.74 247.0,63.09 247.5,62.52 248.0,62.01 248.5,61.58 249.0,61.82 249.5,62.29 250.0,62.83 250.5,63.45 251.0,64.13 251.5,64.89 252.0,65.73 252.5,66.63 253.0,67.60 253.5,68.64 254.0,69.75 254.5,70.92 255.0,72.16 255.5,73.46 256.0,74.82 256.5,76.24 257.0,77.73 257.5,79.26 258.0,80.86 258.5,82.50 259.0,84.20 259.5,85.94 260.0,87.73 260.5,89.56 261.0,91.43 261.5,93.34 262.0,95.29 262.5,97.26 263.0,99.27 263.5,101.31 264.0,103.37 264.5,105.45 265.0,107.55 265.5,109.67 266.0,111.80 266.5,113.94 267.0,116.09 267.5,118.24 268.0,120.39 268.5,122.54 269.0,124.69 269.5,126.83 270.0,128.95 270.5,131.06 271.0,133.16 271.5,135.23 272.0,137.28 272.5,139.31 273.0,141.31 273.5,143.27 274.0,145.21 274.5,147.10 275.0,148.96 275.5,150.77 276.0,152.54 276.5,154.27 277.0,155.94 277.5,157.57 278.0,159.14 278.5,160.66 279.0,162.11 279.5,163.51 280.0,164.85 280.5,166.13 281.0,167.34 281.5,168.49 282.0,169.57 282.5,170.59 283.0,171.53 283.5,172.41 284.0,173.21 284.5,173.94 285.0,174.60 285.5,175.19 286.0,175.71 286.5,176.15 287.0,176.06 287.5,175.60 288.0,175.07 288.5,174.46 289.0,173.79 289.5,173.04 290.0,172.22 290.5,171.33 291.0,170.37 291.5,169.34 292.0,168.25 292.5,167.08 293.0,165.86 293.5,164.57 294.0,163.21 294.5,161.80 295.0,160.33 295.5,158.80 296.0,157.22 296.5,155.58 297.0,153.90 297.5,152.16 298.0,150.38 298.5,148.56 299.0,146.69 299.5,144.79 300.0,142.85 300.5,140.87 301.0,138.87 301.5,136.84 302.0,134.78 302.5,132.70 303.0,130.60 303.5,128.49 304.0,126.36 304.5,124.22 305.0,122.07 305.5,119.92 306.0,117.77 306.5,115.62 307.0,113.48 307.5,111.34 308.0,109.21 308.5,107.09 309.0,105.00 309.5,102.92 310.0,100.86 310.5,98.83 311.0,96.83 311.5,94.86 312.0,92.92 312.5,91.02 313.0,89.15 313.5,87.33 314.0,85.55 314.5,83.82 315.0,82.14 315.5,80.50 316.0,78.92 316.5,77.40 317.0,75.93 317.5,74.52 318.0,73.17 318.5,71.88 319.0,70.66 319.5,69.50 320.0,68.41 320.5,67.38 321.0,66.43 321.5,65.54 322.0,64.72 322.5,63.98 323.0,63.31 323.5,62.70 324.0,62.18 324.5,61.72 325.0,61.67 325.5,62.12 326.0,62.64 326.5,63.23 327.0,63.89 327.5,64.63 328.0,65.44 328.5,66.31 329.0,67.26 329.5,68.28 330.0,69.36 330.5,70.51 331.0,71.73 331.5,73.01 332.0,74.35 332.5,75.75 333.0,77.22 333.5,78.73 334.0,80.31 334.5,81.94 335.0,83.61 335.5,85.34 336.0,87.11 336.5,88.93 337.0,90.79 337.5,92.69 338.0,94.62 338.5,96.59 339.0,98.59 339.5,100.61 340.0,102.67 340.5,104.74 341.0,106.84 341.5,108.95 342.0,111.08 342.5,113.21 343.0,115.36 343.5,117.51 344.0,119.66 344.5,121.81 345.0,123.96 345.5,126.10 346.0,128.23 346.5,130.35 347.0,132.45 347.5,134.53 348.0,136.59 348.5,138.62 349.0,140.63 349.5,142.61 350.0,144.55 350.5,146.46 351.0,148.33 351.5,150.16 352.0,151.95 352.5,153.69 353.0,155.38 353.5,157.02 354.0,158.61 354.5,160.15 355.0,161.63 355.5,163.05 356.0,164.41 356.5,165.70 357.0,166.94 357.5,168.11 358.0,169.21 358.5,170.25 359.0,171.22 359.5,172.12 360.0,172.94 360.5,173.70 361.0,174.39 361.5,175.00 362.0,175.54 362.5,176.01 363.0,176.20 363.5,175.76 364.0,175.26 364.5,174.68 365.0,174.03 365.5,173.30 366.0,172.51 366.5,171.64 367.0,170.70 367.5,169.70 368.0,168.63 368.5,167.49 369.0,166.28 369.5,165.01 370.0,163.68 370.5,162.29 371.0,160.84 371.5,159.33 372.0,157.76 372.5,156.14 373.0,154.48 373.5,152.76 374.0,150.99 374.5,149.18 375.0,147.33 375.5,145.44 376.0,143.51 376.5,141.55 377.0,139.56 377.5,137.53 378.0,135.48 378.5,133.41 379.0,131.32 379.5,129.21 380.0,127.09 380.5,124.95 381.0,122.81 381.5,120.66 382.0,118.50 382.5,116.35 383.0,114.20 383.5,112.06 384.0,109.93 384.5,107.81 385.0,105.71 385.5,103.62 386.0,101.56 386.5,99.52 387.0,97.51 387.5,95.52 388.0,93.57 388.5,91.66 389.0,89.78 389.5,87.95 390.0,86.15 390.5,84.40 391.0,82.70 391.5,81.05 392.0,79.45 392.5,77.91 393.0,76.42 393.5,74.99 394.0,73.62 394.5,72.31 395.0,71.07 395.5,69.89 396.0,68.77 396.5,67.72 397.0,66.74 397.5,65.83 398.0,64.99 398.5,64.22 399.0,63.53 399.5,62.90 400.0,62.35 400.5,61.87 401.0,61.54 401.5,61.96 402.0,62.45 402.5,63.02 403.0,63.66 403.5,64.37 404.0,65.15 404.5,66.01 405.0,66.93 405.5,67.92 406.0,68.99 406.5,70.11 407.0,71.31 407.5,72.57 408.0,73.89 408.5,75.27 409.0,76.71 409.5,78.21 410.0,79.77 410.5,81.38 411.0,83.04 411.5,84.75 412.0,86.50 412.5,88.31 413.0,90.15 413.5,92.04 414.0,93.96 414.5,95.92 415.0,97.90 415.5,99.92 416.0,101.97 416.5,104.03 417.0,106.12 417.5,108.23 418.0,110.35 418.5,112.49 419.0,114.63 419.5,116.78 420.0,118.93 420.5,121.08 421.0,123.23 421.5,125.37 422.0,127.51 422.5,129.63 423.0,131.74 423.5,133.82 424.0,135.89 424.5,137.94 425.0,139.95 425.5,141.94 426.0,143.90 426.5,145.82 427.0,147.70 427.5,149.54 428.0,151.35 428.5,153.10 429.0,154.81 429.5,156.47 430.0,158.08 430.5,159.63 431.0,161.13 431.5,162.57 432.0,163.95 432.5,165.27 433.0,166.53 433.5,167.72 434.0,168.84 434.5,169.90 435.0,170.90 435.5,171.82 436.0,172.67 436.5,173.45 437.0,174.16 437.5,174.80 438.0,175.36 438.5,175.85 439.0,176.27 439.5,175.92 440.0,175.44 440.5,174.88 441.0,174.26 441.5,173.56 442.0,172.79 442.5,171.94 443.0,171.03 443.5,170.05 444.0,169.00 444.5,167.88 445.0,166.70 445.5,165.45 446.0,164.14 446.5,162.77 447.0,161.34 447.5,159.85 448.0,158.30 448.5,156.70 449.0,155.05 449.5,153.35 450.0,151.60 450.5,149.80 451.0,147.96 451.5,146.09 452.0,144.17 452.5,142.22 453.0,140.24 453.5,138.22 454.0,136.18 454.5,134.12 455.0,132.03"/></svg><div style="left:468px;top:153px;width:79px;height:74px;background:#b3b3b3;border-top:1px solid #666;border-left:1px solid #e2e2e2;border-right:1px solid #5a5a5a;border-bottom:2px solid #5a5a5a;"></div><div style="left:469px;top:154px;width:77px;height:1px;background:#e2e2e2;"></div><svg style="left:471px;top:161.8px" width="12" height="12"><circle cx="6" cy="6" r="5" fill="#fff" stroke="#000" stroke-width="1.1"/><circle cx="6" cy="6" r="2.4" fill="#000"/></svg><div style="left:519px;top:158.3px;width:24px;height:19px;background:#000;border-right:1px solid #dadada;border-bottom:1px solid #dadada;"></div><svg style="left:519px;top:158.3px" width="24" height="19"><polyline fill="none" stroke="#ffffff" stroke-width="1" shape-rendering="crispEdges" points="2.1,13.4 10,3.1 18.3,13.4 21.4,9.1"/></svg><svg style="left:471px;top:182.4px" width="12" height="12"><circle cx="6" cy="6" r="5" fill="#fff" stroke="#000" stroke-width="1.1"/><circle cx="6" cy="6" r="2.4" fill="#000"/></svg><div style="left:519px;top:181.20000000000002px;width:24px;height:19px;background:#000;border-right:1px solid #dadada;border-bottom:1px solid #dadada;"></div><svg style="left:519px;top:181.2px" width="24" height="19"><polyline fill="none" stroke="#ff4a4a" stroke-width="1" shape-rendering="crispEdges" points="2.1,13.6 11.9,3.1 21.4,12.9"/></svg><svg style="left:471px;top:203.0px" width="12" height="12"><circle cx="6" cy="6" r="5" fill="#fff" stroke="#000" stroke-width="1.1"/><circle cx="6" cy="6" r="2.4" fill="#000"/></svg><div style="left:519px;top:204.10000000000002px;width:24px;height:19px;background:#000;border-right:1px solid #dadada;border-bottom:1px solid #dadada;"></div><svg style="left:519px;top:204.1px" width="24" height="19"><polyline fill="none" stroke="#00ff00" stroke-width="1" shape-rendering="crispEdges" points="2.1,13.4 10,3.1 18.3,13.4 21.4,9.1"/></svg><svg style="left:558px;top:144px" width="12" height="7"><path d="M6.3 0 L11.8 4.8 L0.2 4.8 Z" fill="#8a8a8a"/><rect x="0" y="4.8" width="12" height="1.4" fill="#3c3c3c"/></svg><div style="left:559px;top:152px;width:10px;height:240px;background:#383838;border:1px solid #222;border-right-color:#c8c8c8;"></div><svg style="left:558px;top:395px" width="12" height="7"><path d="M0.5 0 L11.5 0 L6 6.5 Z" fill="#8a8a8a"/><path d="M6 6.5 L11.5 0" stroke="#3c3c3c" stroke-width="1"/></svg><svg style="left:545.4px;top:264.8px" width="31.600000000000023" height="16.19999999999999"><path d="M0.5 7.199999999999989 L30.600000000000023 0.5 L30.600000000000023 15.199999999999989 Z" fill="#3a92ee"/><path d="M0.5 7.199999999999989 L30.600000000000023 15.199999999999989 L30.600000000000023 0.5" stroke="#1b5cab" stroke-width="1" fill="none"/><path d="M0.5 7.199999999999989 L30.600000000000023 0.5" stroke="#8cc4ff" stroke-width="1" fill="none"/></svg><div style="left:16px;top:421px;width:636px;height:262px;border:1px solid #5a5a5a;"></div><div style="left:14px;top:419px;width:637px;height:263px;border:2px solid #d9d9d9;"></div><div style="left:18px;top:424px;width:540px;height:253px;border-top:1px solid #dedede;border-left:1px solid #dedede;border-right:1px solid #5e5e5e;border-bottom:1px solid #5e5e5e;"></div><div style="left:89px;top:433px;width:458px;height:223px;background:#000;"></div><div style="left:89px;top:656px;width:459px;height:2px;background:#d2d2d2;"></div><div style="left:547px;top:433px;width:1px;height:223px;background:#d8d8d8;"></div><div style="left:89px;top:658px;width:1px;height:5px;background:#000;"></div><div style="left:135px;top:658px;width:1px;height:5px;background:#000;"></div><div style="left:180px;top:658px;width:1px;height:5px;background:#000;"></div><div style="left:226px;top:658px;width:1px;height:5px;background:#000;"></div><div style="left:272px;top:658px;width:1px;height:5px;background:#000;"></div><div style="left:317px;top:658px;width:1px;height:5px;background:#000;"></div><div style="left:363px;top:658px;width:1px;height:5px;background:#000;"></div><div style="left:409px;top:658px;width:1px;height:5px;background:#000;"></div><div style="left:455px;top:658px;width:1px;height:5px;background:#000;"></div><div style="left:500px;top:658px;width:1px;height:5px;background:#000;"></div><div style="left:546px;top:658px;width:1px;height:5px;background:#000;"></div><svg style="left:89px;top:433px" width="458" height="223"><polyline fill="none" stroke="#ff4a4a" stroke-width="1.2" shape-rendering="crispEdges" points="0.0,67.57 0.5,68.47 1.0,69.12 1.5,69.68 2.0,70.25 2.5,70.81 3.0,71.38 3.5,71.94 4.0,72.50 4.5,73.07 5.0,73.63 5.5,74.20 6.0,74.76 6.5,75.33 7.0,76.25 7.5,77.88 8.0,79.51 8.5,81.14 9.0,82.77 9.5,84.40 10.0,86.09 10.5,88.13 11.0,90.18 11.5,92.23 12.0,94.27 12.5,96.32 13.0,98.36 13.5,100.41 14.0,102.46 14.5,104.50 15.0,106.55 15.5,108.59 16.0,110.64 16.5,112.69 17.0,114.73 17.5,116.78 18.0,118.83 18.5,120.87 19.0,122.92 19.5,124.96 20.0,127.01 20.5,129.06 21.0,131.10 21.5,133.15 22.0,135.06 22.5,136.72 23.0,138.38 23.5,140.04 24.0,141.69 24.5,143.35 25.0,145.01 25.5,146.67 26.0,148.32 26.5,149.98 27.0,151.64 27.5,152.59 28.0,152.95 28.5,153.30 29.0,153.65 29.5,154.01 30.0,154.36 30.5,154.71 31.0,155.07 31.5,155.42 32.0,155.78 32.5,156.13 33.0,156.48 33.5,156.84 34.0,157.19 34.5,157.55 35.0,157.90 35.5,156.99 36.0,156.09 36.5,155.18 37.0,154.27 37.5,153.36 38.0,152.46 38.5,151.55 39.0,150.64 39.5,149.73 40.0,148.83 40.5,147.92 41.0,147.01 41.5,146.11 42.0,145.20 42.5,144.29 43.0,143.38 43.5,142.48 44.0,141.57 44.5,140.66 45.0,139.75 45.5,138.85 46.0,137.94 46.5,137.03 47.0,136.13 47.5,135.02 48.0,133.10 48.5,131.19 49.0,129.27 49.5,127.36 50.0,125.44 50.5,123.53 51.0,121.61 51.5,119.70 52.0,117.78 52.5,115.87 53.0,113.96 53.5,112.04 54.0,110.13 54.5,108.21 55.0,106.30 55.5,104.38 56.0,102.47 56.5,100.55 57.0,98.64 57.5,96.72 58.0,94.81 58.5,92.89 59.0,90.98 59.5,89.06 60.0,87.15 60.5,85.23 61.0,83.32 61.5,81.41 62.0,79.49 62.5,77.58 63.0,75.66 63.5,73.75 64.0,71.83 64.5,70.14 65.0,69.33 65.5,68.53 66.0,67.72 66.5,66.91 67.0,66.11 67.5,65.30 68.0,64.97 68.5,64.63 69.0,64.30 69.5,63.97 70.0,63.63 70.5,63.30 71.0,62.97 71.5,62.63 72.0,62.30 72.5,61.97 73.0,61.88 73.5,62.78 74.0,63.67 74.5,64.57 75.0,65.47 75.5,66.37 76.0,67.26 76.5,68.16 77.0,68.93 77.5,69.49 78.0,70.05 78.5,70.62 79.0,71.18 79.5,71.75 80.0,72.31 80.5,72.88 81.0,73.44 81.5,74.01 82.0,74.57 82.5,75.14 83.0,75.70 83.5,77.33 84.0,78.96 84.5,80.59 85.0,82.22 85.5,83.85 86.0,85.47 86.5,87.44 87.0,89.48 87.5,91.53 88.0,93.58 88.5,95.62 89.0,97.67 89.5,99.71 90.0,101.76 90.5,103.81 91.0,105.85 91.5,107.90 92.0,109.95 92.5,111.99 93.0,114.04 93.5,116.08 94.0,118.13 94.5,120.18 95.0,122.22 95.5,124.27 96.0,126.32 96.5,128.36 97.0,130.41 97.5,132.45 98.0,134.50 98.5,136.16 99.0,137.81 99.5,139.47 100.0,141.13 100.5,142.79 101.0,144.44 101.5,146.10 102.0,147.76 102.5,149.42 103.0,151.07 103.5,152.47 104.0,152.82 104.5,153.18 105.0,153.53 105.5,153.89 106.0,154.24 106.5,154.59 107.0,154.95 107.5,155.30 108.0,155.66 108.5,156.01 109.0,156.36 109.5,156.72 110.0,157.07 110.5,157.43 111.0,157.78 111.5,157.30 112.0,156.39 112.5,155.49 113.0,154.58 113.5,153.67 114.0,152.76 114.5,151.86 115.0,150.95 115.5,150.04 116.0,149.14 116.5,148.23 117.0,147.32 117.5,146.41 118.0,145.51 118.5,144.60 119.0,143.69 119.5,142.79 120.0,141.88 120.5,140.97 121.0,140.06 121.5,139.16 122.0,138.25 122.5,137.34 123.0,136.43 123.5,135.53 124.0,133.75 124.5,131.84 125.0,129.92 125.5,128.01 126.0,126.09 126.5,124.18 127.0,122.27 127.5,120.35 128.0,118.44 128.5,116.52 129.0,114.61 129.5,112.69 130.0,110.78 130.5,108.86 131.0,106.95 131.5,105.03 132.0,103.12 132.5,101.20 133.0,99.29 133.5,97.37 134.0,95.46 134.5,93.54 135.0,91.63 135.5,89.72 136.0,87.80 136.5,85.89 137.0,83.97 137.5,82.06 138.0,80.14 138.5,78.23 139.0,76.31 139.5,74.40 140.0,72.48 140.5,70.57 141.0,69.61 141.5,68.80 142.0,67.99 142.5,67.19 143.0,66.38 143.5,65.57 144.0,65.08 144.5,64.75 145.0,64.41 145.5,64.08 146.0,63.75 146.5,63.41 147.0,63.08 147.5,62.75 148.0,62.41 148.5,62.08 149.0,61.75 149.5,62.47 150.0,63.37 150.5,64.27 151.0,65.16 151.5,66.06 152.0,66.96 152.5,67.86 153.0,68.73 153.5,69.30 154.0,69.86 154.5,70.43 155.0,70.99 155.5,71.56 156.0,72.12 156.5,72.69 157.0,73.25 157.5,73.81 158.0,74.38 158.5,74.94 159.0,75.51 159.5,76.78 160.0,78.40 160.5,80.03 161.0,81.66 161.5,83.29 162.0,84.92 162.5,86.74 163.0,88.79 163.5,90.83 164.0,92.88 164.5,94.93 165.0,96.97 165.5,99.02 166.0,101.06 166.5,103.11 167.0,105.16 167.5,107.20 168.0,109.25 168.5,111.30 169.0,113.34 169.5,115.39 170.0,117.43 170.5,119.48 171.0,121.53 171.5,123.57 172.0,125.62 172.5,127.67 173.0,129.71 173.5,131.76 174.0,133.80 174.5,135.59 175.0,137.25 175.5,138.91 176.0,140.57 176.5,142.22 177.0,143.88 177.5,145.54 178.0,147.20 178.5,148.85 179.0,150.51 179.5,152.17 180.0,152.70 180.5,153.06 181.0,153.41 181.5,153.77 182.0,154.12 182.5,154.47 183.0,154.83 183.5,155.18 184.0,155.54 184.5,155.89 185.0,156.24 185.5,156.60 186.0,156.95 186.5,157.31 187.0,157.66 187.5,157.61 188.0,156.70 188.5,155.80 189.0,154.89 189.5,153.98 190.0,153.07 190.5,152.17 191.0,151.26 191.5,150.35 192.0,149.44 192.5,148.54 193.0,147.63 193.5,146.72 194.0,145.82 194.5,144.91 195.0,144.00 195.5,143.09 196.0,142.19 196.5,141.28 197.0,140.37 197.5,139.46 198.0,138.56 198.5,137.65 199.0,136.74 199.5,135.84 200.0,134.40 200.5,132.49 201.0,130.57 201.5,128.66 202.0,126.75 202.5,124.83 203.0,122.92 203.5,121.00 204.0,119.09 204.5,117.17 205.0,115.26 205.5,113.34 206.0,111.43 206.5,109.51 207.0,107.60 207.5,105.68 208.0,103.77 208.5,101.85 209.0,99.94 209.5,98.02 210.0,96.11 210.5,94.20 211.0,92.28 211.5,90.37 212.0,88.45 212.5,86.54 213.0,84.62 213.5,82.71 214.0,80.79 214.5,78.88 215.0,76.96 215.5,75.05 216.0,73.13 216.5,71.22 217.0,69.88 217.5,69.07 218.0,68.27 218.5,67.46 219.0,66.65 219.5,65.85 220.0,65.19 220.5,64.86 221.0,64.53 221.5,64.19 222.0,63.86 222.5,63.53 223.0,63.19 223.5,62.86 224.0,62.53 224.5,62.19 225.0,61.86 225.5,62.17 226.0,63.06 226.5,63.96 227.0,64.86 227.5,65.76 228.0,66.65 228.5,67.55 229.0,68.45 229.5,69.11 230.0,69.67 230.5,70.24 231.0,70.80 231.5,71.36 232.0,71.93 232.5,72.49 233.0,73.06 233.5,73.62 234.0,74.19 234.5,74.75 235.0,75.32 235.5,76.22 236.0,77.85 236.5,79.48 237.0,81.11 237.5,82.74 238.0,84.37 238.5,86.05 239.0,88.09 239.5,90.14 240.0,92.18 240.5,94.23 241.0,96.28 241.5,98.32 242.0,100.37 242.5,102.42 243.0,104.46 243.5,106.51 244.0,108.55 244.5,110.60 245.0,112.65 245.5,114.69 246.0,116.74 246.5,118.79 247.0,120.83 247.5,122.88 248.0,124.92 248.5,126.97 249.0,129.02 249.5,131.06 250.0,133.11 250.5,135.03 251.0,136.69 251.5,138.35 252.0,140.00 252.5,141.66 253.0,143.32 253.5,144.97 254.0,146.63 254.5,148.29 255.0,149.95 255.5,151.60 256.0,152.58 256.5,152.94 257.0,153.29 257.5,153.65 258.0,154.00 258.5,154.35 259.0,154.71 259.5,155.06 260.0,155.42 260.5,155.77 261.0,156.12 261.5,156.48 262.0,156.83 262.5,157.19 263.0,157.54 263.5,157.89 264.0,157.01 264.5,156.10 265.0,155.20 265.5,154.29 266.0,153.38 266.5,152.47 267.0,151.57 267.5,150.66 268.0,149.75 268.5,148.85 269.0,147.94 269.5,147.03 270.0,146.12 270.5,145.22 271.0,144.31 271.5,143.40 272.0,142.49 272.5,141.59 273.0,140.68 273.5,139.77 274.0,138.87 274.5,137.96 275.0,137.05 275.5,136.14 276.0,135.06 276.5,133.14 277.0,131.23 277.5,129.31 278.0,127.40 278.5,125.48 279.0,123.57 279.5,121.65 280.0,119.74 280.5,117.82 281.0,115.91 281.5,113.99 282.0,112.08 282.5,110.16 283.0,108.25 283.5,106.33 284.0,104.42 284.5,102.51 285.0,100.59 285.5,98.68 286.0,96.76 286.5,94.85 287.0,92.93 287.5,91.02 288.0,89.10 288.5,87.19 289.0,85.27 289.5,83.36 290.0,81.44 290.5,79.53 291.0,77.61 291.5,75.70 292.0,73.78 292.5,71.87 293.0,70.15 293.5,69.35 294.0,68.54 294.5,67.74 295.0,66.93 295.5,66.12 296.0,65.32 296.5,64.97 297.0,64.64 297.5,64.31 298.0,63.97 298.5,63.64 299.0,63.31 299.5,62.97 300.0,62.64 300.5,62.31 301.0,61.97 301.5,61.86 302.0,62.76 302.5,63.66 303.0,64.55 303.5,65.45 304.0,66.35 304.5,67.25 305.0,68.14 305.5,68.91 306.0,69.48 306.5,70.04 307.0,70.61 307.5,71.17 308.0,71.74 308.5,72.30 309.0,72.87 309.5,73.43 310.0,74.00 310.5,74.56 311.0,75.12 311.5,75.69 312.0,77.30 312.5,78.93 313.0,80.55 313.5,82.18 314.0,83.81 314.5,85.44 315.0,87.40 315.5,89.44 316.0,91.49 316.5,93.53 317.0,95.58 317.5,97.63 318.0,99.67 318.5,101.72 319.0,103.77 319.5,105.81 320.0,107.86 320.5,109.90 321.0,111.95 321.5,114.00 322.0,116.04 322.5,118.09 323.0,120.14 323.5,122.18 324.0,124.23 324.5,126.27 325.0,128.32 325.5,130.37 326.0,132.41 326.5,134.46 327.0,136.12 327.5,137.78 328.0,139.44 328.5,141.10 329.0,142.75 329.5,144.41 330.0,146.07 330.5,147.73 331.0,149.38 331.5,151.04 332.0,152.46 332.5,152.82 333.0,153.17 333.5,153.53 334.0,153.88 334.5,154.23 335.0,154.59 335.5,154.94 336.0,155.30 336.5,155.65 337.0,156.00 337.5,156.36 338.0,156.71 338.5,157.06 339.0,157.42 339.5,157.77 340.0,157.32 340.5,156.41 341.0,155.50 341.5,154.60 342.0,153.69 342.5,152.78 343.0,151.88 343.5,150.97 344.0,150.06 344.5,149.15 345.0,148.25 345.5,147.34 346.0,146.43 346.5,145.52 347.0,144.62 347.5,143.71 348.0,142.80 348.5,141.90 349.0,140.99 349.5,140.08 350.0,139.17 350.5,138.27 351.0,137.36 351.5,136.45 352.0,135.55 352.5,133.79 353.0,131.88 353.5,129.96 354.0,128.05 354.5,126.13 355.0,124.22 355.5,122.30 356.0,120.39 356.5,118.47 357.0,116.56 357.5,114.64 358.0,112.73 358.5,110.82 359.0,108.90 359.5,106.99 360.0,105.07 360.5,103.16 361.0,101.24 361.5,99.33 362.0,97.41 362.5,95.50 363.0,93.58 363.5,91.67 364.0,89.75 364.5,87.84 365.0,85.92 365.5,84.01 366.0,82.09 366.5,80.18 367.0,78.27 367.5,76.35 368.0,74.44 368.5,72.52 369.0,70.61 369.5,69.62 370.0,68.82 370.5,68.01 371.0,67.20 371.5,66.40 372.0,65.59 372.5,65.09 373.0,64.75 373.5,64.42 374.0,64.09 374.5,63.75 375.0,63.42 375.5,63.09 376.0,62.75 376.5,62.42 377.0,62.09 377.5,61.75 378.0,62.45 378.5,63.35 379.0,64.25 379.5,65.15 380.0,66.04 380.5,66.94 381.0,67.84 381.5,68.72 382.0,69.29 382.5,69.85 383.0,70.42 383.5,70.98 384.0,71.55 384.5,72.11 385.0,72.67 385.5,73.24 386.0,73.80 386.5,74.37 387.0,74.93 387.5,75.50 388.0,76.74 388.5,78.37 389.0,80.00 389.5,81.63 390.0,83.26 390.5,84.89 391.0,86.70 391.5,88.75 392.0,90.79 392.5,92.84 393.0,94.89 393.5,96.93 394.0,98.98 394.5,101.02 395.0,103.07 395.5,105.12 396.0,107.16 396.5,109.21 397.0,111.25 397.5,113.30 398.0,115.35 398.5,117.39 399.0,119.44 399.5,121.49 400.0,123.53 400.5,125.58 401.0,127.62 401.5,129.67 402.0,131.72 402.5,133.76 403.0,135.56 403.5,137.22 404.0,138.88 404.5,140.53 405.0,142.19 405.5,143.85 406.0,145.51 406.5,147.16 407.0,148.82 407.5,150.48 408.0,152.13 408.5,152.70 409.0,153.05 409.5,153.41 410.0,153.76 410.5,154.11 411.0,154.47 411.5,154.82 412.0,155.17 412.5,155.53 413.0,155.88 413.5,156.24 414.0,156.59 414.5,156.94 415.0,157.30 415.5,157.65 416.0,157.63 416.5,156.72 417.0,155.81 417.5,154.91 418.0,154.00 418.5,153.09 419.0,152.18 419.5,151.28 420.0,150.37 420.5,149.46 421.0,148.56 421.5,147.65 422.0,146.74 422.5,145.83 423.0,144.93 423.5,144.02 424.0,143.11 424.5,142.20 425.0,141.30 425.5,140.39 426.0,139.48 426.5,138.58 427.0,137.67 427.5,136.76 428.0,135.85 428.5,134.44 429.0,132.53 429.5,130.61 430.0,128.70 430.5,126.78 431.0,124.87 431.5,122.95 432.0,121.04 432.5,119.12 433.0,117.21 433.5,115.30 434.0,113.38 434.5,111.47 435.0,109.55 435.5,107.64 436.0,105.72 436.5,103.81 437.0,101.89 437.5,99.98 438.0,98.06 438.5,96.15 439.0,94.23 439.5,92.32 440.0,90.40 440.5,88.49 441.0,86.58 441.5,84.66 442.0,82.75 442.5,80.83 443.0,78.92 443.5,77.00 444.0,75.09 444.5,73.17 445.0,71.26 445.5,69.90 446.0,69.09 446.5,68.28 447.0,67.48 447.5,66.67 448.0,65.86 448.5,65.20 449.0,64.87 449.5,64.53 450.0,64.20 450.5,63.87 451.0,63.53 451.5,63.20 452.0,62.87 452.5,62.53 453.0,62.20 453.5,61.87 454.0,62.15 454.5,63.05 455.0,63.94"/><polyline fill="none" stroke="#00ff00" stroke-width="1.2" shape-rendering="crispEdges" points="0.0,120.90 0.5,122.90 1.0,124.88 1.5,126.83 2.0,128.75 2.5,130.65 3.0,132.50 3.5,134.32 4.0,136.10 4.5,137.84 5.0,139.52 5.5,141.16 6.0,142.74 6.5,144.27 7.0,145.74 7.5,147.15 8.0,148.50 8.5,149.78 9.0,150.99 9.5,152.14 10.0,153.21 10.5,154.21 11.0,155.13 11.5,155.98 12.0,156.75 12.5,157.44 13.0,158.05 13.5,158.58 14.0,159.03 14.5,159.39 15.0,159.67 15.5,159.86 16.0,159.97 16.5,160.00 17.0,159.94 17.5,159.79 18.0,159.56 18.5,159.25 19.0,158.85 19.5,158.37 20.0,157.81 20.5,157.17 21.0,156.45 21.5,155.65 22.0,154.77 22.5,153.81 23.0,152.78 23.5,151.68 24.0,150.51 24.5,149.26 25.0,147.96 25.5,146.58 26.0,145.15 26.5,143.65 27.0,142.10 27.5,140.50 28.0,138.84 28.5,137.13 29.0,135.38 29.5,133.58 30.0,131.75 30.5,129.88 31.0,127.97 31.5,126.03 32.0,124.07 32.5,122.08 33.0,120.08 33.5,118.05 34.0,116.01 34.5,113.97 35.0,111.91 35.5,109.85 36.0,107.80 36.5,105.74 37.0,103.70 37.5,101.66 38.0,99.64 38.5,97.64 39.0,95.66 39.5,93.70 40.0,91.77 40.5,89.87 41.0,88.01 41.5,86.18 42.0,84.40 42.5,82.66 43.0,80.96 43.5,79.31 44.0,77.72 44.5,76.18 45.0,74.70 45.5,73.28 46.0,71.93 46.5,70.63 47.0,69.41 47.5,68.25 48.0,67.17 48.5,66.15 49.0,65.22 49.5,64.36 50.0,63.57 50.5,62.87 51.0,62.25 51.5,61.70 52.0,61.24 52.5,60.87 53.0,60.57 53.5,60.36 54.0,60.24 54.5,60.20 55.0,60.25 55.5,60.38 56.0,60.59 56.5,60.89 57.0,61.27 57.5,61.74 58.0,62.29 58.5,62.91 59.0,63.62 59.5,64.41 60.0,65.28 60.5,66.22 61.0,67.24 61.5,68.33 62.0,69.49 62.5,70.72 63.0,72.02 63.5,73.38 64.0,74.80 64.5,76.29 65.0,77.83 65.5,79.43 66.0,81.08 66.5,82.77 67.0,84.52 67.5,86.31 68.0,88.14 68.5,90.00 69.0,91.90 69.5,93.83 70.0,95.79 70.5,97.78 71.0,99.78 71.5,101.80 72.0,103.84 72.5,105.89 73.0,107.94 73.5,110.00 74.0,112.05 74.5,114.11 75.0,116.16 75.5,118.19 76.0,120.22 76.5,122.22 77.0,124.21 77.5,126.17 78.0,128.10 78.5,130.01 79.0,131.88 79.5,133.71 80.0,135.50 80.5,137.25 81.0,138.95 81.5,140.61 82.0,142.21 82.5,143.76 83.0,145.25 83.5,146.68 84.0,148.05 84.5,149.35 85.0,150.59 85.5,151.76 86.0,152.85 86.5,153.88 87.0,154.83 87.5,155.70 88.0,156.50 88.5,157.22 89.0,157.85 89.5,158.41 90.0,158.88 90.5,159.28 91.0,159.58 91.5,159.81 92.0,159.95 92.5,160.00 93.0,159.97 93.5,159.85 94.0,159.65 94.5,159.37 95.0,159.00 95.5,158.55 96.0,158.01 96.5,157.40 97.0,156.70 97.5,155.93 98.0,155.07 98.5,154.14 99.0,153.14 99.5,152.06 100.0,150.91 100.5,149.69 101.0,148.41 101.5,147.06 102.0,145.64 102.5,144.17 103.0,142.64 103.5,141.05 104.0,139.41 104.5,137.72 105.0,135.98 105.5,134.20 106.0,132.38 106.5,130.52 107.0,128.62 107.5,126.70 108.0,124.74 108.5,122.76 109.0,120.76 109.5,118.74 110.0,116.71 110.5,114.66 111.0,112.61 111.5,110.55 112.0,108.50 112.5,106.44 113.0,104.39 113.5,102.35 114.0,100.33 114.5,98.32 115.0,96.33 115.5,94.36 116.0,92.42 116.5,90.51 117.0,88.64 117.5,86.80 118.0,85.00 118.5,83.24 119.0,81.53 119.5,79.87 120.0,78.26 120.5,76.70 121.0,75.20 121.5,73.76 122.0,72.38 122.5,71.07 123.0,69.82 123.5,68.64 124.0,67.53 124.5,66.49 125.0,65.53 125.5,64.64 126.0,63.83 126.5,63.10 127.0,62.45 127.5,61.88 128.0,61.39 128.5,60.98 129.0,60.66 129.5,60.43 130.0,60.27 130.5,60.20 131.0,60.22 131.5,60.32 132.0,60.51 132.5,60.78 133.0,61.13 133.5,61.57 134.0,62.09 134.5,62.69 135.0,63.37 135.5,64.14 136.0,64.98 136.5,65.89 137.0,66.88 137.5,67.95 138.0,69.09 138.5,70.29 139.0,71.57 139.5,72.91 140.0,74.31 140.5,75.78 141.0,77.30 141.5,78.88 142.0,80.51 142.5,82.19 143.0,83.92 143.5,85.69 144.0,87.51 144.5,89.36 145.0,91.25 145.5,93.17 146.0,95.12 146.5,97.10 147.0,99.10 147.5,101.11 148.0,103.14 148.5,105.19 149.0,107.24 149.5,109.30 150.0,111.35 150.5,113.41 151.0,115.46 151.5,117.50 152.0,119.53 152.5,121.54 153.0,123.54 153.5,125.51 154.0,127.45 154.5,129.36 155.0,131.25 155.5,133.09 156.0,134.90 156.5,136.66 157.0,138.38 157.5,140.05 158.0,141.67 158.5,143.24 159.0,144.75 159.5,146.20 160.0,147.59 160.5,148.92 161.0,150.18 161.5,151.37 162.0,152.49 162.5,153.54 163.0,154.51 163.5,155.41 164.0,156.24 164.5,156.98 165.0,157.65 165.5,158.23 166.0,158.73 166.5,159.15 167.0,159.49 167.5,159.74 168.0,159.91 168.5,159.99 169.0,159.99 169.5,159.90 170.0,159.73 170.5,159.47 171.0,159.13 171.5,158.71 172.0,158.20 172.5,157.62 173.0,156.95 173.5,156.20 174.0,155.37 174.5,154.47 175.0,153.49 175.5,152.44 176.0,151.31 176.5,150.12 177.0,148.85 177.5,147.52 178.0,146.13 178.5,144.68 179.0,143.16 179.5,141.59 180.0,139.97 180.5,138.30 181.0,136.58 181.5,134.81 182.0,133.00 182.5,131.15 183.0,129.27 183.5,127.35 184.0,125.41 184.5,123.44 185.0,121.44 185.5,119.43 186.0,117.40 186.5,115.36 187.0,113.31 187.5,111.25 188.0,109.20 188.5,107.14 189.0,105.09 189.5,103.04 190.0,101.01 190.5,99.00 191.0,97.00 191.5,95.03 192.0,93.08 192.5,91.16 193.0,89.27 193.5,87.42 194.0,85.61 194.5,83.83 195.0,82.11 195.5,80.43 196.0,78.80 196.5,77.22 197.0,75.70 197.5,74.24 198.0,72.84 198.5,71.50 199.0,70.23 199.5,69.03 200.0,67.90 200.5,66.83 201.0,65.85 201.5,64.93 202.0,64.10 202.5,63.34 203.0,62.66 203.5,62.06 204.0,61.55 204.5,61.11 205.0,60.76 205.5,60.50 206.0,60.31 206.5,60.22 207.0,60.21 207.5,60.28 208.0,60.44 208.5,60.68 209.0,61.00 209.5,61.41 210.0,61.90 210.5,62.48 211.0,63.13 211.5,63.87 212.0,64.68 212.5,65.57 213.0,66.54 213.5,67.58 214.0,68.69 214.5,69.88 215.0,71.13 215.5,72.45 216.0,73.83 216.5,75.27 217.0,76.78 217.5,78.34 218.0,79.95 218.5,81.61 219.0,83.33 219.5,85.09 220.0,86.89 220.5,88.73 221.0,90.61 221.5,92.52 222.0,94.46 222.5,96.43 223.0,98.42 223.5,100.43 224.0,102.45 224.5,104.49 225.0,106.54 225.5,108.60 226.0,110.65 226.5,112.71 227.0,114.76 227.5,116.81 228.0,118.84 228.5,120.86 229.0,122.86 229.5,124.84 230.0,126.79 230.5,128.72 231.0,130.61 231.5,132.47 232.0,134.29 232.5,136.07 233.0,137.80 233.5,139.49 234.0,141.13 234.5,142.71 235.0,144.24 235.5,145.71 236.0,147.12 236.5,148.47 237.0,149.76 237.5,150.97 238.0,152.12 238.5,153.19 239.0,154.19 239.5,155.12 240.0,155.97 240.5,156.74 241.0,157.43 241.5,158.04 242.0,158.57 242.5,159.02 243.0,159.38 243.5,159.66 244.0,159.86 244.5,159.97 245.0,160.00 245.5,159.94 246.0,159.80 246.5,159.57 247.0,159.26 247.5,158.86 248.0,158.39 248.5,157.83 249.0,157.18 249.5,156.46 250.0,155.66 250.5,154.78 251.0,153.83 251.5,152.80 252.0,151.70 252.5,150.53 253.0,149.29 253.5,147.98 254.0,146.61 254.5,145.18 255.0,143.68 255.5,142.13 256.0,140.53 256.5,138.87 257.0,137.17 257.5,135.42 258.0,133.62 258.5,131.79 259.0,129.91 259.5,128.01 260.0,126.07 260.5,124.11 261.0,122.12 261.5,120.12 262.0,118.09 262.5,116.06 263.0,114.01 263.5,111.95 264.0,109.90 264.5,107.84 265.0,105.78 265.5,103.74 266.0,101.70 266.5,99.68 267.0,97.68 267.5,95.70 268.0,93.74 268.5,91.81 269.0,89.91 269.5,88.05 270.0,86.22 270.5,84.43 271.0,82.69 271.5,80.99 272.0,79.35 272.5,77.75 273.0,76.21 273.5,74.73 274.0,73.31 274.5,71.95 275.0,70.66 275.5,69.43 276.0,68.27 276.5,67.19 277.0,66.17 277.5,65.23 278.0,64.37 278.5,63.59 279.0,62.88 279.5,62.26 280.0,61.71 280.5,61.25 281.0,60.87 281.5,60.58 282.0,60.37 282.5,60.24 283.0,60.20 283.5,60.24 284.0,60.37 284.5,60.59 285.0,60.88 285.5,61.26 286.0,61.73 286.5,62.27 287.0,62.90 287.5,63.61 288.0,64.40 288.5,65.26 289.0,66.20 289.5,67.22 290.0,68.31 290.5,69.47 291.0,70.70 291.5,71.99 292.0,73.35 292.5,74.77 293.0,76.26 293.5,77.80 294.0,79.39 294.5,81.04 295.0,82.74 295.5,84.48 296.0,86.27 296.5,88.10 297.0,89.96 297.5,91.86 298.0,93.80 298.5,95.75 299.0,97.74 299.5,99.74 300.0,101.76 300.5,103.80 301.0,105.84 301.5,107.90 302.0,109.96 302.5,112.01 303.0,114.07 303.5,116.11 304.0,118.15 304.5,120.18 305.0,122.18 305.5,124.17 306.0,126.13 306.5,128.07 307.0,129.97 307.5,131.84 308.0,133.67 308.5,135.47 309.0,137.22 309.5,138.92 310.0,140.58 310.5,142.18 311.0,143.73 311.5,145.22 312.0,146.65 312.5,148.02 313.0,149.33 313.5,150.56 314.0,151.73 314.5,152.83 315.0,153.86 315.5,154.81 316.0,155.69 316.5,156.48 317.0,157.20 317.5,157.84 318.0,158.40 318.5,158.88 319.0,159.27 319.5,159.58 320.0,159.80 320.5,159.94 321.0,160.00 321.5,159.97 322.0,159.86 322.5,159.66 323.0,159.37 323.5,159.01 324.0,158.56 324.5,158.02 325.0,157.41 325.5,156.72 326.0,155.94 326.5,155.09 327.0,154.16 327.5,153.16 328.0,152.08 328.5,150.94 329.0,149.72 329.5,148.43 330.0,147.08 330.5,145.67 331.0,144.20 331.5,142.67 332.0,141.08 332.5,139.44 333.0,137.75 333.5,136.02 334.0,134.24 334.5,132.41 335.0,130.55 335.5,128.66 336.0,126.73 336.5,124.78 337.0,122.80 337.5,120.80 338.0,118.78 338.5,116.75 339.0,114.70 339.5,112.65 340.0,110.59 340.5,108.54 341.0,106.48 341.5,104.43 342.0,102.39 342.5,100.37 343.0,98.36 343.5,96.37 344.0,94.40 344.5,92.46 345.0,90.55 345.5,88.68 346.0,86.84 346.5,85.03 347.0,83.28 347.5,81.57 348.0,79.90 348.5,78.29 349.0,76.73 349.5,75.23 350.0,73.79 350.5,72.41 351.0,71.09 351.5,69.84 352.0,68.66 352.5,67.55 353.0,66.51 353.5,65.55 354.0,64.66 354.5,63.85 355.0,63.11 355.5,62.46 356.0,61.89 356.5,61.40 357.0,60.99 357.5,60.67 358.0,60.43 358.5,60.27 359.0,60.20 359.5,60.22 360.0,60.32 360.5,60.50 361.0,60.77 361.5,61.12 362.0,61.56 362.5,62.08 363.0,62.68 363.5,63.36 364.0,64.12 364.5,64.96 365.0,65.87 365.5,66.86 366.0,67.93 366.5,69.06 367.0,70.27 367.5,71.54 368.0,72.88 368.5,74.28 369.0,75.75 369.5,77.27 370.0,78.85 370.5,80.48 371.0,82.16 371.5,83.89 372.0,85.66 372.5,87.47 373.0,89.33 373.5,91.22 374.0,93.14 374.5,95.08 375.0,97.06 375.5,99.06 376.0,101.07 376.5,103.10 377.0,105.15 377.5,107.20 378.0,109.26 378.5,111.31 379.0,113.37 379.5,115.42 380.0,117.46 380.5,119.49 381.0,121.50 381.5,123.50 382.0,125.47 382.5,127.41 383.0,129.33 383.5,131.21 384.0,133.05 384.5,134.86 385.0,136.63 385.5,138.35 386.0,140.02 386.5,141.64 387.0,143.21 387.5,144.72 388.0,146.17 388.5,147.56 389.0,148.89 389.5,150.15 390.0,151.34 390.5,152.47 391.0,153.52 391.5,154.50 392.0,155.40 392.5,156.22 393.0,156.97 393.5,157.63 394.0,158.22 394.5,158.72 395.0,159.14 395.5,159.48 396.0,159.74 396.5,159.91 397.0,159.99 397.5,159.99 398.0,159.90 398.5,159.73 399.0,159.48 399.5,159.14 400.0,158.72 400.5,158.22 401.0,157.63 401.5,156.96 402.0,156.21 402.5,155.39 403.0,154.49 403.5,153.51 404.0,152.46 404.5,151.33 405.0,150.14 405.5,148.88 406.0,147.55 406.5,146.16 407.0,144.71 407.5,143.19 408.0,141.63 408.5,140.00 409.0,138.33 409.5,136.61 410.0,134.85 410.5,133.04 411.0,131.19 411.5,129.31 412.0,127.39 412.5,125.45 413.0,123.48 413.5,121.48 414.0,119.47 414.5,117.44 415.0,115.40 415.5,113.35 416.0,111.29 416.5,109.24 417.0,107.18 417.5,105.13 418.0,103.09 418.5,101.05 419.0,99.04 419.5,97.04 420.0,95.07 420.5,93.12 421.0,91.20 421.5,89.31 422.0,87.46 422.5,85.64 423.0,83.87 423.5,82.14 424.0,80.46 424.5,78.83 425.0,77.25 425.5,75.73 426.0,74.27 426.5,72.87 427.0,71.53 427.5,70.26 428.0,69.05 428.5,67.92 429.0,66.85 429.5,65.87 430.0,64.95 430.5,64.11 431.0,63.35 431.5,62.67 432.0,62.07 432.5,61.56 433.0,61.12 433.5,60.77 434.0,60.50 434.5,60.32 435.0,60.22 435.5,60.20 436.0,60.28 436.5,60.43 437.0,60.67 437.5,61.00 438.0,61.40 438.5,61.89 439.0,62.47 439.5,63.12 440.0,63.85 440.5,64.66 441.0,65.55 441.5,66.52 442.0,67.56 442.5,68.67 443.0,69.85 443.5,71.10 444.0,72.42 444.5,73.80 445.0,75.24 445.5,76.74 446.0,78.30 446.5,79.92 447.0,81.58 447.5,83.29 448.0,85.05 448.5,86.85 449.0,88.69 449.5,90.57 450.0,92.48 450.5,94.42 451.0,96.39 451.5,98.38 452.0,100.39 452.5,102.41 453.0,104.45 453.5,106.50 454.0,108.56 454.5,110.61 455.0,112.67"/><polyline fill="none" stroke="#ffffff" stroke-width="1.2" shape-rendering="crispEdges" points="0.0,137.18 0.5,134.27 1.0,131.32 1.5,128.33 2.0,125.31 2.5,122.27 3.0,119.21 3.5,116.13 4.0,113.04 4.5,109.95 5.0,106.86 5.5,103.77 6.0,100.70 6.5,97.64 7.0,94.60 7.5,91.59 8.0,88.61 8.5,85.67 9.0,82.77 9.5,79.91 10.0,77.11 10.5,74.37 11.0,71.68 11.5,69.07 12.0,66.52 12.5,64.04 13.0,61.65 13.5,59.34 14.0,57.11 14.5,54.98 15.0,52.94 15.5,50.99 16.0,49.15 16.5,47.41 17.0,45.78 17.5,44.26 18.0,42.85 18.5,41.55 19.0,40.38 19.5,39.32 20.0,38.38 20.5,37.56 21.0,36.87 21.5,36.30 22.0,35.86 22.5,35.55 23.0,35.36 23.5,35.30 24.0,35.37 24.5,35.56 25.0,35.88 25.5,36.33 26.0,36.91 26.5,37.61 27.0,38.43 27.5,39.37 28.0,40.44 28.5,41.62 29.0,42.93 29.5,44.34 30.0,45.87 30.5,47.51 31.0,49.25 31.5,51.10 32.0,53.05 32.5,55.10 33.0,57.24 33.5,59.47 34.0,61.78 34.5,64.18 35.0,66.66 35.5,69.21 36.0,71.84 36.5,74.52 37.0,77.27 37.5,80.08 38.0,82.93 38.5,85.83 39.0,88.78 39.5,91.76 40.0,94.77 40.5,97.81 41.0,100.87 41.5,103.95 42.0,107.03 42.5,110.13 43.0,113.22 43.5,116.31 44.0,119.38 44.5,122.44 45.0,125.49 45.5,128.50 46.0,131.49 46.5,134.43 47.0,137.34 47.5,140.20 48.0,143.01 48.5,145.77 49.0,148.46 49.5,151.09 50.0,153.65 50.5,156.14 51.0,158.55 51.5,160.88 52.0,163.12 52.5,165.27 53.0,167.32 53.5,169.28 54.0,171.14 54.5,172.90 55.0,174.55 55.5,176.09 56.0,177.52 56.5,178.83 57.0,180.03 57.5,181.11 58.0,182.07 58.5,182.91 59.0,183.62 59.5,184.21 60.0,184.67 60.5,185.01 61.0,185.22 61.5,185.30 62.0,185.25 62.5,185.08 63.0,184.78 63.5,184.35 64.0,183.80 64.5,183.12 65.0,182.32 65.5,181.39 66.0,180.35 66.5,179.19 67.0,177.90 67.5,176.51 68.0,175.00 68.5,173.38 69.0,171.65 69.5,169.82 70.0,167.89 70.5,165.86 71.0,163.73 71.5,161.52 72.0,159.22 72.5,156.83 73.0,154.37 73.5,151.83 74.0,149.21 74.5,146.54 75.0,143.80 75.5,141.00 76.0,138.16 76.5,135.26 77.0,132.32 77.5,129.35 78.0,126.34 78.5,123.31 79.0,120.25 79.5,117.18 80.0,114.09 80.5,111.00 81.0,107.91 81.5,104.82 82.0,101.74 82.5,98.67 83.0,95.63 83.5,92.61 84.0,89.62 84.5,86.66 85.0,83.75 85.5,80.88 86.0,78.06 86.5,75.30 87.0,72.59 87.5,69.95 88.0,67.38 88.5,64.88 89.0,62.45 89.5,60.11 90.0,57.86 90.5,55.69 91.0,53.62 91.5,51.64 92.0,49.76 92.5,47.99 93.0,46.32 93.5,44.76 94.0,43.32 94.5,41.98 95.0,40.76 95.5,39.66 96.0,38.68 96.5,37.83 97.0,37.09 97.5,36.48 98.0,36.00 98.5,35.64 99.0,35.41 99.5,35.31 100.0,35.33 100.5,35.48 101.0,35.76 101.5,36.17 102.0,36.70 102.5,37.35 103.0,38.14 103.5,39.04 104.0,40.06 104.5,41.21 105.0,42.47 105.5,43.85 106.0,45.34 106.5,46.94 107.0,48.65 107.5,50.46 108.0,52.38 108.5,54.39 109.0,56.50 109.5,58.70 110.0,60.99 110.5,63.36 111.0,65.81 111.5,68.34 112.0,70.94 112.5,73.60 113.0,76.33 113.5,79.12 114.0,81.96 114.5,84.84 115.0,87.77 115.5,90.74 116.0,93.74 116.5,96.77 117.0,99.83 117.5,102.90 118.0,105.98 118.5,109.07 119.0,112.17 119.5,115.26 120.0,118.34 120.5,121.41 121.0,124.45 121.5,127.48 122.0,130.48 122.5,133.44 123.0,136.36 123.5,139.24 124.0,142.06 124.5,144.84 125.0,147.55 125.5,150.21 126.0,152.79 126.5,155.30 127.0,157.74 127.5,160.09 128.0,162.36 128.5,164.55 129.0,166.64 129.5,168.63 130.0,170.52 130.5,172.32 131.0,174.00 131.5,175.58 132.0,177.05 132.5,178.40 133.0,179.64 133.5,180.76 134.0,181.76 134.5,182.64 135.0,183.39 135.5,184.02 136.0,184.53 136.5,184.91 137.0,185.16 137.5,185.29 138.0,185.28 138.5,185.15 139.0,184.90 139.5,184.51 140.0,184.00 140.5,183.37 141.0,182.61 141.5,181.72 142.0,180.72 142.5,179.59 143.0,178.35 143.5,176.99 144.0,175.52 144.5,173.94 145.0,172.25 145.5,170.45 146.0,168.56 146.5,166.56 147.0,164.47 147.5,162.28 148.0,160.01 148.5,157.65 149.0,155.21 149.5,152.70 150.0,150.11 150.5,147.46 151.0,144.74 151.5,141.96 152.0,139.13 152.5,136.25 153.0,133.33 153.5,130.36 154.0,127.37 154.5,124.34 155.0,121.29 155.5,118.22 156.0,115.14 156.5,112.05 157.0,108.96 157.5,105.87 158.0,102.78 158.5,99.71 159.0,96.66 159.5,93.63 160.0,90.63 160.5,87.66 161.0,84.74 161.5,81.85 162.0,79.01 162.5,76.23 163.0,73.50 163.5,70.84 164.0,68.24 164.5,65.72 165.0,63.27 165.5,60.90 166.0,58.62 166.5,56.42 167.0,54.31 167.5,52.30 168.0,50.39 168.5,48.58 169.0,46.88 169.5,45.28 170.0,43.79 170.5,42.42 171.0,41.16 171.5,40.02 172.0,39.00 172.5,38.10 173.0,37.33 173.5,36.68 174.0,36.15 174.5,35.75 175.0,35.47 175.5,35.33 176.0,35.31 176.5,35.42 177.0,35.65 177.5,36.01 178.0,36.50 178.5,37.12 179.0,37.86 179.5,38.72 180.0,39.70 180.5,40.81 181.0,42.03 181.5,43.37 182.0,44.82 182.5,46.38 183.0,48.05 183.5,49.83 184.0,51.71 184.5,53.69 185.0,55.77 185.5,57.94 186.0,60.20 186.5,62.54 187.0,64.97 187.5,67.47 188.0,70.05 188.5,72.69 189.0,75.40 189.5,78.16 190.0,80.98 190.5,83.86 191.0,86.77 191.5,89.73 192.0,92.72 192.5,95.74 193.0,98.79 193.5,101.85 194.0,104.93 194.5,108.02 195.0,111.12 195.5,114.21 196.0,117.29 196.5,120.36 197.0,123.42 197.5,126.45 198.0,129.46 198.5,132.43 199.0,135.37 199.5,138.26 200.0,141.11 200.5,143.90 201.0,146.64 201.5,149.31 202.0,151.92 202.5,154.46 203.0,156.92 203.5,159.30 204.0,161.60 204.5,163.81 205.0,165.94 205.5,167.96 206.0,169.89 206.5,171.72 207.0,173.44 207.5,175.06 208.0,176.56 208.5,177.95 209.0,179.23 209.5,180.39 210.0,181.43 210.5,182.35 211.0,183.15 211.5,183.82 212.0,184.37 212.5,184.79 213.0,185.09 213.5,185.26 214.0,185.30 214.5,185.21 215.0,185.00 215.5,184.66 216.0,184.19 216.5,183.60 217.0,182.88 217.5,182.04 218.0,181.07 218.5,179.99 219.0,178.79 219.5,177.47 220.0,176.04 220.5,174.49 221.0,172.84 221.5,171.08 222.0,169.21 222.5,167.25 223.0,165.19 223.5,163.03 224.0,160.79 224.5,158.46 225.0,156.05 225.5,153.56 226.0,151.00 226.5,148.37 227.0,145.67 227.5,142.91 228.0,140.10 228.5,137.24 229.0,134.33 229.5,131.38 230.0,128.39 230.5,125.37 231.0,122.33 231.5,119.27 232.0,116.19 232.5,113.10 233.0,110.01 233.5,106.92 234.0,103.83 234.5,100.76 235.0,97.70 235.5,94.66 236.0,91.65 236.5,88.67 237.0,85.73 237.5,82.83 238.0,79.97 238.5,77.17 239.0,74.42 239.5,71.74 240.0,69.12 240.5,66.57 241.0,64.09 241.5,61.70 242.0,59.38 242.5,57.16 243.0,55.02 243.5,52.98 244.0,51.03 244.5,49.19 245.0,47.45 245.5,45.81 246.0,44.29 246.5,42.88 247.0,41.58 247.5,40.40 248.0,39.34 248.5,38.40 249.0,37.58 249.5,36.88 250.0,36.31 250.5,35.87 251.0,35.55 251.5,35.36 252.0,35.30 252.5,35.36 253.0,35.56 253.5,35.88 254.0,36.32 254.5,36.89 255.0,37.59 255.5,38.41 256.0,39.35 256.5,40.42 257.0,41.60 257.5,42.90 258.0,44.31 258.5,45.84 259.0,47.47 259.5,49.22 260.0,51.06 260.5,53.01 261.0,55.05 261.5,57.19 262.0,59.42 262.5,61.74 263.0,64.13 263.5,66.61 264.0,69.16 264.5,71.78 265.0,74.47 265.5,77.22 266.0,80.02 266.5,82.87 267.0,85.78 267.5,88.72 268.0,91.70 268.5,94.71 269.0,97.75 269.5,100.81 270.0,103.88 270.5,106.97 271.0,110.06 271.5,113.16 272.0,116.24 272.5,119.32 273.0,122.38 273.5,125.43 274.0,128.44 274.5,131.43 275.0,134.38 275.5,137.28 276.0,140.15 276.5,142.96 277.0,145.71 277.5,148.41 278.0,151.04 278.5,153.60 279.0,156.09 279.5,158.50 280.0,160.83 280.5,163.07 281.0,165.22 281.5,167.28 282.0,169.25 282.5,171.11 283.0,172.87 283.5,174.52 284.0,176.06 284.5,177.49 285.0,178.81 285.5,180.01 286.0,181.09 286.5,182.05 287.0,182.89 287.5,183.61 288.0,184.20 288.5,184.66 289.0,185.00 289.5,185.21 290.0,185.30 290.5,185.26 291.0,185.08 291.5,184.79 292.0,184.36 292.5,183.81 293.0,183.14 293.5,182.34 294.0,181.41 294.5,180.37 295.0,179.21 295.5,177.93 296.0,176.54 296.5,175.03 297.0,173.41 297.5,171.69 298.0,169.86 298.5,167.93 299.0,165.90 299.5,163.78 300.0,161.56 300.5,159.26 301.0,156.88 301.5,154.42 302.0,151.88 302.5,149.27 303.0,146.59 303.5,143.86 304.0,141.06 304.5,138.21 305.0,135.32 305.5,132.38 306.0,129.41 306.5,126.40 307.0,123.37 307.5,120.31 308.0,117.24 308.5,114.15 309.0,111.06 309.5,107.97 310.0,104.88 310.5,101.80 311.0,98.74 311.5,95.69 312.0,92.67 312.5,89.68 313.0,86.72 313.5,83.81 314.0,80.94 314.5,78.12 315.0,75.35 315.5,72.64 316.0,70.00 316.5,67.43 317.0,64.93 317.5,62.50 318.0,60.16 318.5,57.90 319.0,55.73 319.5,53.66 320.0,51.68 320.5,49.80 321.0,48.03 321.5,46.35 322.0,44.79 322.5,43.34 323.0,42.01 323.5,40.79 324.0,39.68 324.5,38.70 325.0,37.84 325.5,37.11 326.0,36.49 326.5,36.01 327.0,35.65 327.5,35.41 328.0,35.31 328.5,35.33 329.0,35.48 329.5,35.75 330.0,36.16 330.5,36.69 331.0,37.34 331.5,38.12 332.0,39.02 332.5,40.04 333.0,41.18 333.5,42.44 334.0,43.82 334.5,45.31 335.0,46.91 335.5,48.61 336.0,50.42 336.5,52.34 337.0,54.35 337.5,56.46 338.0,58.65 338.5,60.94 339.0,63.31 339.5,65.76 340.0,68.29 340.5,70.88 341.0,73.55 341.5,76.28 342.0,79.06 342.5,81.90 343.0,84.78 343.5,87.71 344.0,90.68 344.5,93.68 345.0,96.71 345.5,99.77 346.0,102.84 346.5,105.92 347.0,109.01 347.5,112.10 348.0,115.19 348.5,118.28 349.0,121.34 349.5,124.39 350.0,127.42 350.5,130.42 351.0,133.38 351.5,136.30 352.0,139.18 352.5,142.01 353.0,144.78 353.5,147.50 354.0,150.15 354.5,152.74 355.0,155.25 355.5,157.69 356.0,160.05 356.5,162.32 357.0,164.50 357.5,166.59 358.0,168.59 358.5,170.49 359.0,172.28 359.5,173.97 360.0,175.55 360.5,177.02 361.0,178.37 361.5,179.61 362.0,180.74 362.5,181.74 363.0,182.62 363.5,183.38 364.0,184.01 364.5,184.52 365.0,184.90 365.5,185.16 366.0,185.28 366.5,185.28 367.0,185.16 367.5,184.90 368.0,184.52 368.5,184.01 369.0,183.38 369.5,182.62 370.0,181.74 370.5,180.74 371.0,179.62 371.5,178.38 372.0,177.02 372.5,175.55 373.0,173.97 373.5,172.29 374.0,170.49 374.5,168.60 375.0,166.60 375.5,164.51 376.0,162.33 376.5,160.05 377.0,157.70 377.5,155.26 378.0,152.75 378.5,150.16 379.0,147.51 379.5,144.79 380.0,142.02 380.5,139.19 381.0,136.31 381.5,133.39 382.0,130.42 382.5,127.43 383.0,124.40 383.5,121.35 384.0,118.29 384.5,115.20 385.0,112.11 385.5,109.02 386.0,105.93 386.5,102.85 387.0,99.78 387.5,96.72 388.0,93.69 388.5,90.69 389.0,87.72 389.5,84.79 390.0,81.91 390.5,79.07 391.0,76.28 391.5,73.56 392.0,70.89 392.5,68.29 393.0,65.77 393.5,63.32 394.0,60.95 394.5,58.66 395.0,56.46 395.5,54.35 396.0,52.34 396.5,50.43 397.0,48.62 397.5,46.91 398.0,45.31 398.5,43.82 399.0,42.45 399.5,41.19 400.0,40.05 400.5,39.02 401.0,38.12 401.5,37.34 402.0,36.69 402.5,36.16 403.0,35.75 403.5,35.48 404.0,35.33 404.5,35.31 405.0,35.41 405.5,35.65 406.0,36.01 406.5,36.49 407.0,37.10 407.5,37.84 408.0,38.70 408.5,39.68 409.0,40.78 409.5,42.00 410.0,43.34 410.5,44.79 411.0,46.35 411.5,48.02 412.0,49.80 412.5,51.67 413.0,53.65 413.5,55.73 414.0,57.90 414.5,60.15 415.0,62.50 415.5,64.92 416.0,67.42 416.5,69.99 417.0,72.64 417.5,75.34 418.0,78.11 418.5,80.93 419.0,83.80 419.5,86.71 420.0,89.67 420.5,92.66 421.0,95.68 421.5,98.73 422.0,101.79 422.5,104.87 423.0,107.96 423.5,111.05 424.0,114.14 424.5,117.23 425.0,120.30 425.5,123.36 426.0,126.39 426.5,129.40 427.0,132.37 427.5,135.31 428.0,138.21 428.5,141.05 429.0,143.85 429.5,146.58 430.0,149.26 430.5,151.87 431.0,154.41 431.5,156.87 432.0,159.26 432.5,161.56 433.0,163.77 433.5,165.89 434.0,167.92 434.5,169.85 435.0,171.68 435.5,173.41 436.0,175.02 436.5,176.53 437.0,177.93 437.5,179.21 438.0,180.37 438.5,181.41 439.0,182.33 439.5,183.13 440.0,183.81 440.5,184.36 441.0,184.79 441.5,185.08 442.0,185.25 442.5,185.30 443.0,185.21 443.5,185.00 444.0,184.66 444.5,184.20 445.0,183.61 445.5,182.89 446.0,182.05 446.5,181.09 447.0,180.01 447.5,178.81 448.0,177.50 448.5,176.07 449.0,174.52 449.5,172.87 450.0,171.11 450.5,169.25 451.0,167.29 451.5,165.23 452.0,163.08 452.5,160.84 453.0,158.51 453.5,156.10 454.0,153.61 454.5,151.05 455.0,148.42"/></svg><div style="left:468px;top:433px;width:79px;height:74px;background:#b3b3b3;border-top:1px solid #666;border-left:1px solid #e2e2e2;border-right:1px solid #5a5a5a;border-bottom:2px solid #5a5a5a;"></div><div style="left:469px;top:434px;width:77px;height:1px;background:#e2e2e2;"></div><svg style="left:471px;top:441.8px" width="12" height="12"><circle cx="6" cy="6" r="5" fill="#fff" stroke="#000" stroke-width="1.1"/><circle cx="6" cy="6" r="2.4" fill="#000"/></svg><div style="left:519px;top:438.3px;width:24px;height:19px;background:#000;border-right:1px solid #dadada;border-bottom:1px solid #dadada;"></div><svg style="left:519px;top:438.3px" width="24" height="19"><polyline fill="none" stroke="#ffffff" stroke-width="1" shape-rendering="crispEdges" points="2.1,13.4 10,3.1 18.3,13.4 21.4,9.1"/></svg><svg style="left:471px;top:462.4px" width="12" height="12"><circle cx="6" cy="6" r="5" fill="#fff" stroke="#000" stroke-width="1.1"/><circle cx="6" cy="6" r="2.4" fill="#000"/></svg><div style="left:519px;top:461.2px;width:24px;height:19px;background:#000;border-right:1px solid #dadada;border-bottom:1px solid #dadada;"></div><svg style="left:519px;top:461.2px" width="24" height="19"><polyline fill="none" stroke="#ff4a4a" stroke-width="1" shape-rendering="crispEdges" points="2.1,13.6 11.9,3.1 21.4,12.9"/></svg><svg style="left:471px;top:483.0px" width="12" height="12"><circle cx="6" cy="6" r="5" fill="#fff" stroke="#000" stroke-width="1.1"/><circle cx="6" cy="6" r="2.4" fill="#000"/></svg><div style="left:519px;top:484.1px;width:24px;height:19px;background:#000;border-right:1px solid #dadada;border-bottom:1px solid #dadada;"></div><svg style="left:519px;top:484.1px" width="24" height="19"><polyline fill="none" stroke="#00ff00" stroke-width="1" shape-rendering="crispEdges" points="2.1,13.4 10,3.1 18.3,13.4 21.4,9.1"/></svg><svg style="left:558px;top:424.5px" width="12" height="7"><path d="M6.3 0 L11.8 4.8 L0.2 4.8 Z" fill="#a0a0a0"/><rect x="0" y="4.8" width="12" height="1.4" fill="#8a8a8a"/></svg><div style="left:559px;top:432.5px;width:10px;height:223.5px;background:#8e8e8e;border:1px solid #7a7a7a;border-right-color:#c8c8c8;"></div><svg style="left:558px;top:659px" width="12" height="7"><path d="M0.5 0 L11.5 0 L6 6.5 Z" fill="#a0a0a0"/><path d="M6 6.5 L11.5 0" stroke="#8a8a8a" stroke-width="1"/></svg><div style="left:545px;top:536px;width:2px;height:16px;background:#707070;"></div><svg style="left:545.2px;top:537px" width="31.799999999999955" height="15.5"><path d="M0.5 7 L30.799999999999955 0.5 L30.799999999999955 14.5 Z" fill="#6c9bd2"/><path d="M0.5 7 L30.799999999999955 14.5 L30.799999999999955 0.5" stroke="#5a7fae" stroke-width="1" fill="none"/><path d="M0.5 7 L30.799999999999955 0.5" stroke="#9cbfe6" stroke-width="1" fill="none"/></svg><svg style="left:609.5px;top:205.8px" width="26.0" height="7.699999999999989"><path d="M13.0 0 L25.0 5.699999999999989 L1 5.699999999999989 Z" fill="#8a8a8a"/><rect x="1" y="5.199999999999989" width="24.0" height="1.5" fill="#7c7c7c"/></svg><div style="left:610.5px;top:214px;width:24.0px;height:92px;background:#bababa;border-top:1px solid #8c8c8c;border-left:1px solid #6e6e6e;border-right:2px solid #e2e2e2;border-bottom:2px solid #e2e2e2;"></div><div style="left:611.5px;top:215px;width:1px;height:89px;background:#a6a6a6;"></div><div style="left:612.5px;top:283px;width:20.0px;height:21px;background:#9c9c9c;"></div><svg style="left:609.5px;top:308px" width="26.0" height="8"><path d="M1 0 L25.0 0 L13.0 8 Z" fill="#8a8a8a"/><path d="M13.0 8 L25.0 0" stroke="#5a5a5a" stroke-width="1"/></svg><div style="left:608.0px;top:272px;width:29.0px;height:11px;background:#000;"></div><div style="left:608.0px;top:276.62px;width:29.0px;height:1px;background:#9a9a9a;"></div><div style="left:579px;top:365px;width:64px;height:24px;background:#b3b3b3;border-top:1px solid #000;border-left:1px solid #000;border-right:2px solid #000;border-bottom:2px solid #000;"></div><div style="left:580px;top:366px;width:61px;height:21px;border-top:2px solid #ededed;border-left:2px solid #ededed;border-bottom:2px solid #6a6a6a;border-right:2px solid #6a6a6a;"></div><div style="left:574px;top:427px;width:51px;height:17px;background:#b8b8b8;"></div><svg style="left:608px;top:487.3px" width="25.700000000000045" height="8.199999999999989"><path d="M12.850000000000023 0 L24.700000000000045 6.199999999999989 L1 6.199999999999989 Z" fill="#8a8a8a"/><rect x="1" y="5.699999999999989" width="23.700000000000045" height="1.5" fill="#7c7c7c"/></svg><div style="left:609px;top:495.5px;width:23.700000000000045px;height:100.5px;background:#bababa;border-top:1px solid #8c8c8c;border-left:1px solid #6e6e6e;border-right:2px solid #e2e2e2;border-bottom:2px solid #e2e2e2;"></div><div style="left:610px;top:496.5px;width:1px;height:97.5px;background:#a6a6a6;"></div><div style="left:611px;top:593px;width:19.700000000000045px;height:1px;background:#9c9c9c;"></div><svg style="left:608px;top:597px" width="25.700000000000045" height="7.5"><path d="M1 0 L24.700000000000045 0 L12.850000000000023 7.5 Z" fill="#8a8a8a"/><path d="M12.850000000000023 7.5 L24.700000000000045 0" stroke="#5a5a5a" stroke-width="1"/></svg><div style="left:606.5px;top:582px;width:28.700000000000045px;height:11px;background:#000;"></div><div style="left:606.5px;top:586.62px;width:28.700000000000045px;height:1px;background:#9a9a9a;"></div><div style="left:584px;top:622px;width:54px;height:36px;background:#b3b3b3;border-top:1px solid #000;border-left:1px solid #000;border-right:2px solid #000;border-bottom:2px solid #000;"></div><div style="left:585px;top:623px;width:51px;height:33px;border-top:2px solid #ededed;border-left:2px solid #ededed;border-bottom:2px solid #6a6a6a;border-right:2px solid #6a6a6a;"></div><div style="left:664px;top:112px;width:361px;height:364px;border:1px solid #5a5a5a;"></div><div style="left:662px;top:110px;width:362px;height:365px;border:2px solid #d9d9d9;"></div><div style="left:683px;top:176px;width:98px;height:1px;background:#05060c;"></div><svg style="left:735px;top:180px" width="26" height="20" viewBox="0 0 26 20">
<path d="M6 9.2 L22.5 0.8 M6 9.2 L22.5 18.2" stroke="#4a4a4a" stroke-width="0.9" fill="none"/>
<circle cx="4.2" cy="9.2" r="2.8" fill="#c8c8c8" stroke="#e8e8e8" stroke-width="1"/>
<rect x="22" y="0.5" width="3" height="18.5" fill="#333"/><rect x="23" y="2" width="1" height="15.5" fill="#9a9a9a"/>
</svg><div style="left:837px;top:176.5px;width:65px;height:28.0px;background:#d3d3d3;border-top:1px solid #e6e6e6;border-left:1px solid #e6e6e6;border-right:1px solid #6a6a6a;border-bottom:1px solid #6a6a6a;"></div><div style="left:838px;top:177.5px;width:63px;height:26.0px;border-top:1px solid #a0a0a0;border-left:1px solid #a0a0a0;border-right:2px solid #f0f0f0;border-bottom:2px solid #f0f0f0;"></div><div style="left:839px;top:178.5px;width:61px;height:24.0px;border-top:1px solid #5e5e5e;border-left:1px solid #5e5e5e;"></div><div style="left:690px;top:213px;width:299px;height:1px;background:#000;"></div><div style="left:795px;top:220px;width:1px;height:250px;background:#000;"></div><div style="left:925px;top:222px;width:1px;height:250px;background:#000;"></div><div style="left:675px;top:239.5px;width:114px;height:28.0px;background:#d3d3d3;border-top:1px solid #e6e6e6;border-left:1px solid #e6e6e6;border-right:1px solid #6a6a6a;border-bottom:1px solid #6a6a6a;"></div><div style="left:676px;top:240.5px;width:112px;height:26.0px;border-top:1px solid #a0a0a0;border-left:1px solid #a0a0a0;border-right:2px solid #f0f0f0;border-bottom:2px solid #f0f0f0;"></div><div style="left:677px;top:241.5px;width:110px;height:24.0px;border-top:1px solid #5e5e5e;border-left:1px solid #5e5e5e;"></div><svg style="left:730px;top:243.5px" width="21" height="18.0"><path d="M1 16.5 L12 1 M1 16.5 L20 16.5" stroke="#000" stroke-width="1" fill="none"/></svg><div style="left:802.5px;top:238.5px;width:114.5px;height:28.0px;background:#d3d3d3;border-top:1px solid #e6e6e6;border-left:1px solid #e6e6e6;border-right:1px solid #6a6a6a;border-bottom:1px solid #6a6a6a;"></div><div style="left:803.5px;top:239.5px;width:112.5px;height:26.0px;border-top:1px solid #a0a0a0;border-left:1px solid #a0a0a0;border-right:2px solid #f0f0f0;border-bottom:2px solid #f0f0f0;"></div><div style="left:804.5px;top:240.5px;width:110.5px;height:24.0px;border-top:1px solid #5e5e5e;border-left:1px solid #5e5e5e;"></div><svg style="left:856px;top:243.0px" width="21" height="18.0"><path d="M1 16.5 L12 1 M1 16.5 L20 16.5" stroke="#000" stroke-width="1" fill="none"/></svg><div style="left:937.2px;top:238.7px;width:65.5px;height:28.0px;background:#d3d3d3;border-top:1px solid #e6e6e6;border-left:1px solid #e6e6e6;border-right:1px solid #6a6a6a;border-bottom:1px solid #6a6a6a;"></div><div style="left:938.2px;top:239.7px;width:63.5px;height:26.0px;border-top:1px solid #a0a0a0;border-left:1px solid #a0a0a0;border-right:2px solid #f0f0f0;border-bottom:2px solid #f0f0f0;"></div><div style="left:939.2px;top:240.7px;width:61.5px;height:24.0px;border-top:1px solid #5e5e5e;border-left:1px solid #5e5e5e;"></div><div style="left:675px;top:300.7px;width:114px;height:28.0px;background:#d3d3d3;border-top:1px solid #e6e6e6;border-left:1px solid #e6e6e6;border-right:1px solid #6a6a6a;border-bottom:1px solid #6a6a6a;"></div><div style="left:676px;top:301.7px;width:112px;height:26.0px;border-top:1px solid #a0a0a0;border-left:1px solid #a0a0a0;border-right:2px solid #f0f0f0;border-bottom:2px solid #f0f0f0;"></div><div style="left:677px;top:302.7px;width:110px;height:24.0px;border-top:1px solid #5e5e5e;border-left:1px solid #5e5e5e;"></div><svg style="left:730px;top:304.7px" width="21" height="18.0"><path d="M1 16.5 L12 1 M1 16.5 L20 16.5" stroke="#000" stroke-width="1" fill="none"/></svg><div style="left:802.5px;top:299.7px;width:114.5px;height:28.0px;background:#d3d3d3;border-top:1px solid #e6e6e6;border-left:1px solid #e6e6e6;border-right:1px solid #6a6a6a;border-bottom:1px solid #6a6a6a;"></div><div style="left:803.5px;top:300.7px;width:112.5px;height:26.0px;border-top:1px solid #a0a0a0;border-left:1px solid #a0a0a0;border-right:2px solid #f0f0f0;border-bottom:2px solid #f0f0f0;"></div><div style="left:804.5px;top:301.7px;width:110.5px;height:24.0px;border-top:1px solid #5e5e5e;border-left:1px solid #5e5e5e;"></div><svg style="left:856px;top:304.2px" width="21" height="18.0"><path d="M1 16.5 L12 1 M1 16.5 L20 16.5" stroke="#000" stroke-width="1" fill="none"/></svg><div style="left:937.2px;top:299.9px;width:65.5px;height:28.0px;background:#d3d3d3;border-top:1px solid #e6e6e6;border-left:1px solid #e6e6e6;border-right:1px solid #6a6a6a;border-bottom:1px solid #6a6a6a;"></div><div style="left:938.2px;top:300.9px;width:63.5px;height:26.0px;border-top:1px solid #a0a0a0;border-left:1px solid #a0a0a0;border-right:2px solid #f0f0f0;border-bottom:2px solid #f0f0f0;"></div><div style="left:939.2px;top:301.9px;width:61.5px;height:24.0px;border-top:1px solid #5e5e5e;border-left:1px solid #5e5e5e;"></div><div style="left:675px;top:361.9px;width:114px;height:28.0px;background:#d3d3d3;border-top:1px solid #e6e6e6;border-left:1px solid #e6e6e6;border-right:1px solid #6a6a6a;border-bottom:1px solid #6a6a6a;"></div><div style="left:676px;top:362.9px;width:112px;height:26.0px;border-top:1px solid #a0a0a0;border-left:1px solid #a0a0a0;border-right:2px solid #f0f0f0;border-bottom:2px solid #f0f0f0;"></div><div style="left:677px;top:363.9px;width:110px;height:24.0px;border-top:1px solid #5e5e5e;border-left:1px solid #5e5e5e;"></div><svg style="left:730px;top:365.9px" width="21" height="18.0"><path d="M1 16.5 L12 1 M1 16.5 L20 16.5" stroke="#000" stroke-width="1" fill="none"/></svg><div style="left:802.5px;top:360.9px;width:114.5px;height:28.0px;background:#d3d3d3;border-top:1px solid #e6e6e6;border-left:1px solid #e6e6e6;border-right:1px solid #6a6a6a;border-bottom:1px solid #6a6a6a;"></div><div style="left:803.5px;top:361.9px;width:112.5px;height:26.0px;border-top:1px solid #a0a0a0;border-left:1px solid #a0a0a0;border-right:2px solid #f0f0f0;border-bottom:2px solid #f0f0f0;"></div><div style="left:804.5px;top:362.9px;width:110.5px;height:24.0px;border-top:1px solid #5e5e5e;border-left:1px solid #5e5e5e;"></div><svg style="left:856px;top:365.4px" width="21" height="18.0"><path d="M1 16.5 L12 1 M1 16.5 L20 16.5" stroke="#000" stroke-width="1" fill="none"/></svg><div style="left:937.2px;top:361.1px;width:65.5px;height:28.0px;background:#d3d3d3;border-top:1px solid #e6e6e6;border-left:1px solid #e6e6e6;border-right:1px solid #6a6a6a;border-bottom:1px solid #6a6a6a;"></div><div style="left:938.2px;top:362.1px;width:63.5px;height:26.0px;border-top:1px solid #a0a0a0;border-left:1px solid #a0a0a0;border-right:2px solid #f0f0f0;border-bottom:2px solid #f0f0f0;"></div><div style="left:939.2px;top:363.1px;width:61.5px;height:24.0px;border-top:1px solid #5e5e5e;border-left:1px solid #5e5e5e;"></div><div style="left:686.5px;top:424.4px;width:78.79999999999995px;height:27.900000000000034px;background:#d3d3d3;border-top:1px solid #e6e6e6;border-left:1px solid #e6e6e6;border-right:1px solid #6a6a6a;border-bottom:1px solid #6a6a6a;"></div><div style="left:687.5px;top:425.4px;width:76.79999999999995px;height:25.900000000000034px;border-top:1px solid #a0a0a0;border-left:1px solid #a0a0a0;border-right:2px solid #f0f0f0;border-bottom:2px solid #f0f0f0;"></div><div style="left:688.5px;top:426.4px;width:74.79999999999995px;height:23.900000000000034px;border-top:1px solid #5e5e5e;border-left:1px solid #5e5e5e;"></div><div style="left:817.7px;top:424.4px;width:78.59999999999991px;height:27.900000000000034px;background:#d3d3d3;border-top:1px solid #e6e6e6;border-left:1px solid #e6e6e6;border-right:1px solid #6a6a6a;border-bottom:1px solid #6a6a6a;"></div><div style="left:818.7px;top:425.4px;width:76.59999999999991px;height:25.900000000000034px;border-top:1px solid #a0a0a0;border-left:1px solid #a0a0a0;border-right:2px solid #f0f0f0;border-bottom:2px solid #f0f0f0;"></div><div style="left:819.7px;top:426.4px;width:74.59999999999991px;height:23.900000000000034px;border-top:1px solid #5e5e5e;border-left:1px solid #5e5e5e;"></div><div style="left:937.6px;top:424.5px;width:65.0px;height:27.80000000000001px;background:#d3d3d3;border-top:1px solid #e6e6e6;border-left:1px solid #e6e6e6;border-right:1px solid #6a6a6a;border-bottom:1px solid #6a6a6a;"></div><div style="left:938.6px;top:425.5px;width:63.0px;height:25.80000000000001px;border-top:1px solid #a0a0a0;border-left:1px solid #a0a0a0;border-right:2px solid #f0f0f0;border-bottom:2px solid #f0f0f0;"></div><div style="left:939.6px;top:426.5px;width:61.0px;height:23.80000000000001px;border-top:1px solid #5e5e5e;border-left:1px solid #5e5e5e;"></div><div style="left:664px;top:480px;width:361px;height:208px;border:1px solid #5a5a5a;"></div><div style="left:662px;top:478px;width:362px;height:209px;border:2px solid #d9d9d9;"></div><div style="left:681px;top:492px;width:122px;height:17px;background:#c6c6c6;"></div><div style="left:683px;top:513px;width:8px;height:20px;background:#c6c6c6;"></div><svg style="left:683px;top:513px" width="8" height="20"><path d="M7 3 L1 10.0 L7 17" fill="#b4b4b4" stroke="#8a8a8a" stroke-width="1"/></svg><div style="left:691px;top:514px;width:295px;height:18px;background:#8f8f8f;border-top:1px solid #7e7e7e;border-left:1px solid #707070;border-right:1px solid #d6d6d6;border-bottom:1px solid #d6d6d6;"></div><div style="left:988px;top:513px;width:7px;height:20px;background:#c6c6c6;"></div><svg style="left:988px;top:513px" width="7" height="20"><path d="M1 3 L6 10.0 L1 17" fill="#b4b4b4" stroke="#8a8a8a" stroke-width="1"/></svg><div style="left:683px;top:536px;width:317px;height:21px;background:#cfcfcf;"></div><div style="left:693px;top:536px;width:1px;height:5px;background:#6a6a6a;"></div><div style="left:713px;top:536px;width:1px;height:3px;background:#6a6a6a;"></div><div style="left:725px;top:536px;width:1px;height:3px;background:#6a6a6a;"></div><div style="left:734px;top:536px;width:1px;height:3px;background:#6a6a6a;"></div><div style="left:740px;top:536px;width:1px;height:3px;background:#6a6a6a;"></div><div style="left:746px;top:536px;width:1px;height:3px;background:#6a6a6a;"></div><div style="left:750px;top:536px;width:1px;height:3px;background:#6a6a6a;"></div><div style="left:754px;top:536px;width:1px;height:3px;background:#6a6a6a;"></div><div style="left:758px;top:536px;width:1px;height:3px;background:#6a6a6a;"></div><div style="left:761px;top:536px;width:1px;height:5px;background:#6a6a6a;"></div><div style="left:781px;top:536px;width:1px;height:3px;background:#6a6a6a;"></div><div style="left:793px;top:536px;width:1px;height:3px;background:#6a6a6a;"></div><div style="left:802px;top:536px;width:1px;height:3px;background:#6a6a6a;"></div><div style="left:808px;top:536px;width:1px;height:3px;background:#6a6a6a;"></div><div style="left:813px;top:536px;width:1px;height:3px;background:#6a6a6a;"></div><div style="left:818px;top:536px;width:1px;height:3px;background:#6a6a6a;"></div><div style="left:822px;top:536px;width:1px;height:3px;background:#6a6a6a;"></div><div style="left:825px;top:536px;width:1px;height:3px;background:#6a6a6a;"></div><div style="left:829px;top:536px;width:1px;height:5px;background:#6a6a6a;"></div><div style="left:849px;top:536px;width:1px;height:3px;background:#6a6a6a;"></div><div style="left:861px;top:536px;width:1px;height:3px;background:#6a6a6a;"></div><div style="left:869px;top:536px;width:1px;height:3px;background:#6a6a6a;"></div><div style="left:876px;top:536px;width:1px;height:3px;background:#6a6a6a;"></div><div style="left:881px;top:536px;width:1px;height:3px;background:#6a6a6a;"></div><div style="left:886px;top:536px;width:1px;height:3px;background:#6a6a6a;"></div><div style="left:890px;top:536px;width:1px;height:3px;background:#6a6a6a;"></div><div style="left:893px;top:536px;width:1px;height:3px;background:#6a6a6a;"></div><div style="left:896px;top:536px;width:1px;height:5px;background:#6a6a6a;"></div><div style="left:917px;top:536px;width:1px;height:3px;background:#6a6a6a;"></div><div style="left:929px;top:536px;width:1px;height:3px;background:#6a6a6a;"></div><div style="left:937px;top:536px;width:1px;height:3px;background:#6a6a6a;"></div><div style="left:944px;top:536px;width:1px;height:3px;background:#6a6a6a;"></div><div style="left:949px;top:536px;width:1px;height:3px;background:#6a6a6a;"></div><div style="left:953px;top:536px;width:1px;height:3px;background:#6a6a6a;"></div><div style="left:957px;top:536px;width:1px;height:3px;background:#6a6a6a;"></div><div style="left:961px;top:536px;width:1px;height:3px;background:#6a6a6a;"></div><div style="left:964px;top:536px;width:1px;height:5px;background:#6a6a6a;"></div><div style="left:984px;top:536px;width:1px;height:3px;background:#6a6a6a;"></div><div style="left:984px;top:536px;width:1px;height:5px;background:#6a6a6a;"></div><div style="left:891px;top:511px;width:10px;height:24px;background:#98c4f0;border-top:1px solid #d2e8ff;border-left:1px solid #d2e8ff;border-right:1px solid #78a6d6;border-bottom:1px solid #78a6d6;"></div><div style="left:895px;top:512px;width:1px;height:22px;background:#d8ecff;"></div><div style="left:896px;top:512px;width:1px;height:22px;background:#6c98c8;"></div><div style="left:679px;top:594px;width:57px;height:26px;background:#b3b3b3;border-top:1px solid #000;border-left:1px solid #000;border-right:2px solid #000;border-bottom:2px solid #000;"></div><div style="left:680px;top:595px;width:54px;height:23px;border-top:2px solid #ededed;border-left:2px solid #ededed;border-bottom:2px solid #6a6a6a;border-right:2px solid #6a6a6a;"></div><div style="left:762px;top:570px;width:126px;height:17px;background:#c6c6c6;"></div><div style="left:753px;top:615px;width:114px;height:7px;background:#a9a9a9;"></div><div style="left:880px;top:615px;width:118px;height:7px;background:#a9a9a9;"></div><div style="left:753px;top:595px;width:7px;height:21px;background:#c6c6c6;"></div><svg style="left:753px;top:595px" width="7" height="21"><path d="M6 3 L1 10.5 L6 18" fill="#b4b4b4" stroke="#8a8a8a" stroke-width="1"/></svg><div style="left:761px;top:596px;width:228px;height:19px;background:#8f8f8f;border-top:1px solid #7e7e7e;border-left:1px solid #707070;border-right:1px solid #d6d6d6;border-bottom:1px solid #d6d6d6;"></div><div style="left:991px;top:595px;width:7px;height:21px;background:#c6c6c6;"></div><svg style="left:991px;top:595px" width="7" height="21"><path d="M1 3 L6 10.5 L1 18" fill="#b4b4b4" stroke="#8a8a8a" stroke-width="1"/></svg><div style="left:751px;top:622px;width:259px;height:21px;background:#cfcfcf;"></div><div style="left:763px;top:622px;width:1px;height:5px;background:#6a6a6a;"></div><div style="left:785px;top:622px;width:1px;height:3px;background:#6a6a6a;"></div><div style="left:799px;top:622px;width:1px;height:3px;background:#6a6a6a;"></div><div style="left:808px;top:622px;width:1px;height:3px;background:#6a6a6a;"></div><div style="left:815px;top:622px;width:1px;height:3px;background:#6a6a6a;"></div><div style="left:821px;top:622px;width:1px;height:3px;background:#6a6a6a;"></div><div style="left:826px;top:622px;width:1px;height:3px;background:#6a6a6a;"></div><div style="left:831px;top:622px;width:1px;height:3px;background:#6a6a6a;"></div><div style="left:834px;top:622px;width:1px;height:3px;background:#6a6a6a;"></div><div style="left:838px;top:622px;width:1px;height:5px;background:#6a6a6a;"></div><div style="left:861px;top:622px;width:1px;height:3px;background:#6a6a6a;"></div><div style="left:874px;top:622px;width:1px;height:3px;background:#6a6a6a;"></div><div style="left:883px;top:622px;width:1px;height:3px;background:#6a6a6a;"></div><div style="left:890px;top:622px;width:1px;height:3px;background:#6a6a6a;"></div><div style="left:896px;top:622px;width:1px;height:3px;background:#6a6a6a;"></div><div style="left:901px;top:622px;width:1px;height:3px;background:#6a6a6a;"></div><div style="left:906px;top:622px;width:1px;height:3px;background:#6a6a6a;"></div><div style="left:910px;top:622px;width:1px;height:3px;background:#6a6a6a;"></div><div style="left:913px;top:622px;width:1px;height:5px;background:#6a6a6a;"></div><div style="left:936px;top:622px;width:1px;height:3px;background:#6a6a6a;"></div><div style="left:949px;top:622px;width:1px;height:3px;background:#6a6a6a;"></div><div style="left:958px;top:622px;width:1px;height:3px;background:#6a6a6a;"></div><div style="left:965px;top:622px;width:1px;height:3px;background:#6a6a6a;"></div><div style="left:971px;top:622px;width:1px;height:3px;background:#6a6a6a;"></div><div style="left:976px;top:622px;width:1px;height:3px;background:#6a6a6a;"></div><div style="left:981px;top:622px;width:1px;height:3px;background:#6a6a6a;"></div><div style="left:985px;top:622px;width:1px;height:3px;background:#6a6a6a;"></div><div style="left:988px;top:622px;width:1px;height:5px;background:#6a6a6a;"></div><svg style="left:866px;top:588px" width="15" height="33"><path d="M1.5 1 L13.5 1 L7.5 32 Z" fill="#8dbff5" stroke="#78acee" stroke-width="0.8"/></svg><div style="left:11px;top:694px;width:1014px;height:72px;border:1px solid #5a5a5a;"></div><div style="left:9px;top:692px;width:1015px;height:73px;border:2px solid #d9d9d9;"></div><div style="left:127px;top:705px;width:79px;height:41px;background:#b3b3b3;border-top:1px solid #000;border-left:1px solid #000;border-right:2px solid #000;border-bottom:2px solid #000;"></div><div style="left:128px;top:706px;width:76px;height:38px;border-top:2px solid #555;border-left:2px solid #555;border-bottom:2px solid #ececec;border-right:2px solid #ececec;"></div><div style="left:244px;top:705px;width:81px;height:41px;background:#b3b3b3;border-top:1px solid #000;border-left:1px solid #000;border-right:2px solid #000;border-bottom:2px solid #000;"></div><div style="left:245px;top:706px;width:78px;height:38px;border-top:2px solid #ededed;border-left:2px solid #ededed;border-bottom:2px solid #6a6a6a;border-right:2px solid #6a6a6a;"></div><svg style="left:363.7px;top:709.5px" width="6.300000000000011" height="19"><path d="M6.300000000000011 0 L0.5 9.5 L6.300000000000011 19 Z" fill="#8c8c8c"/><path d="M0.5 9.5 L6.300000000000011 19" stroke="#555" stroke-width="1"/></svg><svg style="left:553px;top:707px" width="9" height="22"><rect x="0" y="0" width="2" height="22" fill="#c8c8c8"/><path d="M2 0 L8.5 11.0 L2 22 Z" fill="#8c8c8c"/><path d="M8.5 11.0 L2 22" stroke="#555" stroke-width="1"/></svg><div style="left:369px;top:708px;width:184px;height:20px;background:#333333;border-top:1px solid #1a1a1a;"></div><div style="left:369px;top:705px;width:8.5px;height:27px;background:#3b9cf2;border-top:1px solid #8cc8ff;border-left:1px solid #3b9cf2;border-bottom:1px solid #1a5fae;border-right:1px solid #1a5fae;"></div><div style="left:372px;top:706px;width:1px;height:25px;background:#a8d6ff;"></div><div style="left:373px;top:706px;width:1px;height:25px;background:#173a66;"></div><div style="left:373px;top:733px;width:1px;height:5px;background:#000;"></div><div style="left:377px;top:733px;width:1px;height:3px;background:#000;"></div><div style="left:387px;top:733px;width:1px;height:3px;background:#000;"></div><div style="left:396px;top:733px;width:1px;height:3px;background:#000;"></div><div style="left:405px;top:733px;width:1px;height:3px;background:#000;"></div><div style="left:414px;top:733px;width:1px;height:5px;background:#000;"></div><div style="left:423px;top:733px;width:1px;height:3px;background:#000;"></div><div style="left:432px;top:733px;width:1px;height:3px;background:#000;"></div><div style="left:441px;top:733px;width:1px;height:3px;background:#000;"></div><div style="left:450px;top:733px;width:1px;height:3px;background:#000;"></div><div style="left:460px;top:733px;width:1px;height:5px;background:#000;"></div><div style="left:469px;top:733px;width:1px;height:3px;background:#000;"></div><div style="left:478px;top:733px;width:1px;height:3px;background:#000;"></div><div style="left:487px;top:733px;width:1px;height:3px;background:#000;"></div><div style="left:496px;top:733px;width:1px;height:3px;background:#000;"></div><div style="left:505px;top:733px;width:1px;height:5px;background:#000;"></div><div style="left:514px;top:733px;width:1px;height:3px;background:#000;"></div><div style="left:524px;top:733px;width:1px;height:3px;background:#000;"></div><div style="left:533px;top:733px;width:1px;height:3px;background:#000;"></div><div style="left:542px;top:733px;width:1px;height:3px;background:#000;"></div><div style="left:551px;top:733px;width:1px;height:5px;background:#000;"></div><svg style="left:646.7px;top:709.5px" width="6.5" height="16"><path d="M6.5 0 L0.5 8.0 L6.5 16 Z" fill="#8c8c8c"/><path d="M0.5 8.0 L6.5 16" stroke="#555" stroke-width="1"/></svg><svg style="left:845.4px;top:707px" width="9.600000000000023" height="19"><rect x="0" y="0" width="2" height="19" fill="#c8c8c8"/><path d="M2 0 L9.100000000000023 9.5 L2 19 Z" fill="#8c8c8c"/><path d="M9.100000000000023 9.5 L2 19" stroke="#555" stroke-width="1"/></svg><div style="left:652.2px;top:708px;width:193.19999999999993px;height:17px;background:#333333;border-top:1px solid #1a1a1a;"></div><div style="left:652.2px;top:705px;width:8.299999999999955px;height:23.5px;background:#3b9cf2;border-top:1px solid #8cc8ff;border-left:1px solid #3b9cf2;border-bottom:1px solid #1a5fae;border-right:1px solid #1a5fae;"></div><div style="left:655.2px;top:706px;width:1px;height:21.5px;background:#a8d6ff;"></div><div style="left:656.2px;top:706px;width:1px;height:21.5px;background:#173a66;"></div><div style="left:656px;top:730px;width:1px;height:5px;background:#000;"></div><div style="left:663px;top:730px;width:1px;height:3px;background:#000;"></div><div style="left:671px;top:730px;width:1px;height:3px;background:#000;"></div><div style="left:678px;top:730px;width:1px;height:3px;background:#000;"></div><div style="left:686px;top:730px;width:1px;height:3px;background:#000;"></div><div style="left:694px;top:730px;width:1px;height:5px;background:#000;"></div><div style="left:701px;top:730px;width:1px;height:3px;background:#000;"></div><div style="left:709px;top:730px;width:1px;height:3px;background:#000;"></div><div style="left:716px;top:730px;width:1px;height:3px;background:#000;"></div><div style="left:724px;top:730px;width:1px;height:3px;background:#000;"></div><div style="left:731px;top:730px;width:1px;height:5px;background:#000;"></div><div style="left:739px;top:730px;width:1px;height:3px;background:#000;"></div><div style="left:746px;top:730px;width:1px;height:3px;background:#000;"></div><div style="left:754px;top:730px;width:1px;height:3px;background:#000;"></div><div style="left:761px;top:730px;width:1px;height:3px;background:#000;"></div><div style="left:769px;top:730px;width:1px;height:5px;background:#000;"></div><div style="left:776px;top:730px;width:1px;height:3px;background:#000;"></div><div style="left:784px;top:730px;width:1px;height:3px;background:#000;"></div><div style="left:791px;top:730px;width:1px;height:3px;background:#000;"></div><div style="left:799px;top:730px;width:1px;height:3px;background:#000;"></div><div style="left:806px;top:730px;width:1px;height:5px;background:#000;"></div><div style="left:814px;top:730px;width:1px;height:3px;background:#000;"></div><div style="left:821px;top:730px;width:1px;height:3px;background:#000;"></div><div style="left:829px;top:730px;width:1px;height:3px;background:#000;"></div><div style="left:836px;top:730px;width:1px;height:3px;background:#000;"></div><div style="left:844px;top:730px;width:1px;height:5px;background:#000;"></div><svg style="left:0;top:0" width="1034" height="774" font-family="Liberation Sans, sans-serif"><text transform="translate(32.56,21.00) scale(0.8873,1)" font-size="12.86" fill="#1a1a1a">3 Phase Analysis 2025.vi</text><text transform="translate(6.98,46.50) scale(0.9275,1)" font-size="13.0" fill="#1a1a1a">File</text><text transform="translate(39.18,46.50) scale(0.9245,1)" font-size="13.0" fill="#1a1a1a">Edit</text><text transform="translate(73.65,46.50) scale(0.9170,1)" font-size="13.0" fill="#1a1a1a">Operate</text><text transform="translate(129.92,46.50) scale(0.9258,1)" font-size="13.0" fill="#1a1a1a">Tools</text><text transform="translate(173.41,46.50) scale(0.9371,1)" font-size="13.0" fill="#1a1a1a">Window</text><text transform="translate(230.25,46.50) scale(0.9522,1)" font-size="13.0" fill="#1a1a1a">Help</text><text transform="translate(398.82,90.50) scale(0.9792,1)" font-size="32.29" fill="#dcdcdc">3 Phase Analysis</text><text transform="translate(18.04,125.00) scale(0.9682,1)" font-size="12.29" fill="#101028">Instantaneous Waveforms</text><text transform="translate(177.45,126.70) scale(0.9548,1)" font-size="12.0" fill="#101028">Phasor View</text><text x="85.20" y="411.00" font-size="12.6" fill="#101028">0</text><text x="122.22" y="411.00" font-size="12.6" fill="#101028">0.01</text><text x="167.94" y="411.00" font-size="12.6" fill="#101028">0.02</text><text x="213.61" y="411.00" font-size="12.6" fill="#101028">0.03</text><text x="259.28" y="411.00" font-size="12.6" fill="#101028">0.04</text><text x="305.05" y="411.00" font-size="12.6" fill="#101028">0.05</text><text x="350.77" y="411.00" font-size="12.6" fill="#101028">0.06</text><text x="396.54" y="411.00" font-size="12.6" fill="#101028">0.07</text><text x="442.21" y="411.00" font-size="12.6" fill="#101028">0.08</text><text x="487.98" y="411.00" font-size="12.6" fill="#101028">0.09</text><text x="537.20" y="411.00" font-size="12.6" fill="#101028">0.1</text><text transform="translate(53.30,159.90) scale(1.0000,1)" font-size="14" letter-spacing="1.2" fill="#000">30</text><text transform="translate(53.09,199.40) scale(1.0129,1)" font-size="14" letter-spacing="1.2" fill="#000">20</text><text transform="translate(52.66,238.90) scale(1.0397,1)" font-size="14" letter-spacing="1.2" fill="#000">10</text><text transform="translate(61.76,278.40) scale(1.0746,1)" font-size="14" letter-spacing="1.2" fill="#000">0</text><text transform="translate(53.11,317.90) scale(0.9920,1)" font-size="14" letter-spacing="1.2" fill="#000">−10</text><text transform="translate(53.11,357.40) scale(0.9920,1)" font-size="14" letter-spacing="1.2" fill="#000">−20</text><text transform="translate(53.11,396.90) scale(0.9920,1)" font-size="14" letter-spacing="1.2" fill="#000">−30</text><text transform="translate(45.50,288.80) rotate(-90) scale(0.9577,1)" font-size="13.8" font-weight="bold" fill="#05060c">Volts</text><text transform="translate(485.91,170.70) scale(0.9058,1)" font-size="11.86" fill="#101028">V1</text><text transform="translate(485.91,193.70) scale(0.9058,1)" font-size="11.86" fill="#101028">V2</text><text transform="translate(485.91,216.70) scale(0.8993,1)" font-size="11.86" fill="#101028">V3</text><text x="85.20" y="675.00" font-size="12.6" fill="#101028">0</text><text x="122.22" y="675.00" font-size="12.6" fill="#101028">0.01</text><text x="167.94" y="675.00" font-size="12.6" fill="#101028">0.02</text><text x="213.61" y="675.00" font-size="12.6" fill="#101028">0.03</text><text x="259.28" y="675.00" font-size="12.6" fill="#101028">0.04</text><text x="305.05" y="675.00" font-size="12.6" fill="#101028">0.05</text><text x="350.77" y="675.00" font-size="12.6" fill="#101028">0.06</text><text x="396.54" y="675.00" font-size="12.6" fill="#101028">0.07</text><text x="442.21" y="675.00" font-size="12.6" fill="#101028">0.08</text><text x="487.98" y="675.00" font-size="12.6" fill="#101028">0.09</text><text x="537.20" y="675.00" font-size="12.6" fill="#101028">0.1</text><text transform="translate(61.76,439.15) scale(1.0746,1)" font-size="14" letter-spacing="1.2" fill="#000">3</text><text transform="translate(61.51,476.30) scale(1.1250,1)" font-size="14" letter-spacing="1.2" fill="#000">2</text><text transform="translate(60.98,513.45) scale(1.2000,1)" font-size="14" letter-spacing="1.2" fill="#000">1</text><text transform="translate(61.76,550.60) scale(1.0746,1)" font-size="14" letter-spacing="1.2" fill="#000">0</text><text transform="translate(53.10,587.75) scale(0.9937,1)" font-size="14" letter-spacing="1.2" fill="#000">−1</text><text transform="translate(53.10,624.90) scale(0.9937,1)" font-size="14" letter-spacing="1.2" fill="#000">−2</text><text transform="translate(53.11,662.05) scale(0.9874,1)" font-size="14" letter-spacing="1.2" fill="#000">−3</text><text transform="translate(45.50,560.87) rotate(-90) scale(0.9251,1)" font-size="13.8" font-weight="bold" fill="#05060c">Amps</text><text transform="translate(486.00,450.70) scale(0.8993,1)" font-size="11.86" fill="#101028">A1</text><text transform="translate(486.00,473.70) scale(0.8993,1)" font-size="11.86" fill="#101028">A2</text><text transform="translate(486.00,496.70) scale(0.8929,1)" font-size="11.86" fill="#101028">A3</text><text transform="translate(578.20,159.00) scale(0.9519,1)" font-size="12.43" font-weight="bold" fill="#05060c">V Trigger</text><text transform="translate(587.90,183.60) scale(0.9556,1)" font-size="12.57" font-weight="bold" fill="#05060c">Voltage</text><text transform="translate(587.54,198.90) scale(0.9478,1)" font-size="12.29" font-weight="bold" fill="#05060c">Range</text><text transform="translate(581.67,220.00) scale(0.9259,1)" font-size="12.14" fill="#101028">100</text><text transform="translate(587.73,242.20) scale(0.9512,1)" font-size="12.14" fill="#101028">75</text><text transform="translate(587.83,264.70) scale(0.9360,1)" font-size="12.14" fill="#101028">50</text><text transform="translate(587.73,286.40) scale(0.9512,1)" font-size="12.14" fill="#101028">25</text><text transform="translate(593.71,308.60) scale(0.9831,1)" font-size="12.43" fill="#101028">0</text><text transform="translate(579.50,339.70) scale(1.0000,1)" font-size="12.0" font-weight="bold" fill="#05060c">Subtract</text><text transform="translate(579.79,354.80) scale(1.0247,1)" font-size="11.57" font-weight="bold" fill="#05060c">Zero Seq</text><text transform="translate(599.75,381.80) scale(0.9091,1)" font-size="12.0" font-weight="bold" fill="#05060c">OFF</text><text transform="translate(575.15,439.90) scale(0.9419,1)" font-size="12.71" font-weight="bold" fill="#7c7c7c">I Trigger</text><text transform="translate(585.81,465.90) scale(0.9861,1)" font-size="12.14" font-weight="bold" fill="#05060c">Current</text><text transform="translate(585.92,480.80) scale(0.9798,1)" font-size="11.71" font-weight="bold" fill="#05060c">Range</text><text transform="translate(585.92,501.70) scale(0.9587,1)" font-size="11.71" fill="#101028">50</text><text transform="translate(586.12,520.80) scale(0.9431,1)" font-size="11.71" fill="#101028">40</text><text transform="translate(586.02,539.90) scale(0.9508,1)" font-size="11.71" fill="#101028">30</text><text transform="translate(585.82,559.00) scale(0.9667,1)" font-size="11.71" fill="#101028">20</text><text transform="translate(585.51,578.10) scale(0.9915,1)" font-size="11.71" fill="#101028">10</text><text transform="translate(591.90,597.20) scale(1.0000,1)" font-size="11.71" fill="#101028">0</text><text transform="translate(598.69,637.70) scale(1.0256,1)" font-size="11.14" font-weight="bold" fill="#05060c">Zero</text><text transform="translate(595.79,650.90) scale(1.0203,1)" font-size="10.86" font-weight="bold" fill="#05060c">Amps</text><text transform="translate(700.70,137.70) scale(1.0027,1)" font-size="15.86" font-weight="bold" fill="#05060c">Electrical Measurements</text><text transform="translate(682.52,175.00) scale(0.9579,1)" font-size="11.14" font-weight="bold" fill="#05060c">Ch1 Trigger Source</text><text transform="translate(682.80,194.50) scale(1.0136,1)" font-size="10.86" font-weight="bold" fill="#05060c">Amps</text><text transform="translate(761.40,193.50) scale(0.9659,1)" font-size="11.0" font-weight="bold" fill="#05060c">Volts</text><text transform="translate(827.24,170.70) scale(0.9550,1)" font-size="12.0" font-weight="bold" fill="#05060c">Fundamental Frequency</text><text transform="translate(841.01,196.80) scale(0.9933,1)" font-size="16.14" fill="#101028">60.0</text><text transform="translate(909.84,196.80) scale(0.9524,1)" font-size="13.14" font-weight="bold" fill="#05060c">Hz</text><text transform="translate(676.20,234.60) scale(0.9708,1)" font-size="12.14" font-weight="bold" fill="#05060c">V1 RMS</text><text transform="translate(678.71,259.80) scale(0.9935,1)" font-size="16.6" fill="#101028">9.97</text><text transform="translate(742.42,256.40) scale(0.9414,1)" font-size="11.7" font-weight="bold" fill="#000">-1.5</text><text transform="translate(802.81,232.80) scale(0.9774,1)" font-size="11.86" font-weight="bold" fill="#05060c">A1 RMS</text><text transform="translate(806.41,258.80) scale(0.9935,1)" font-size="16.6" fill="#101028">1.41</text><text transform="translate(867.62,256.00) scale(0.9414,1)" font-size="11.7" font-weight="bold" fill="#000">-26.2</text><text transform="translate(937.59,233.80) scale(1.0197,1)" font-size="11.57" font-weight="bold" fill="#05060c">Ch1 Watts</text><text transform="translate(941.91,259.00) scale(0.9935,1)" font-size="16.6" fill="#101028">12.9</text><text transform="translate(676.20,295.80) scale(0.9708,1)" font-size="12.14" font-weight="bold" fill="#05060c">V2 RMS</text><text transform="translate(678.21,321.00) scale(0.9935,1)" font-size="16.6" fill="#101028">10.15</text><text transform="translate(742.42,317.60) scale(0.9414,1)" font-size="11.7" font-weight="bold" fill="#000">-242.3</text><text transform="translate(802.81,294.00) scale(0.9774,1)" font-size="11.86" font-weight="bold" fill="#05060c">A2 RMS</text><text transform="translate(807.10,320.00) scale(0.9935,1)" font-size="16.6" fill="#101028">0.91</text><text transform="translate(867.62,317.20) scale(0.9414,1)" font-size="11.7" font-weight="bold" fill="#000">-248.7</text><text transform="translate(937.59,295.00) scale(1.0197,1)" font-size="11.57" font-weight="bold" fill="#05060c">Ch2 Watts</text><text transform="translate(942.50,320.20) scale(0.9935,1)" font-size="16.6" fill="#101028">8.9</text><text transform="translate(676.20,357.00) scale(0.9708,1)" font-size="12.14" font-weight="bold" fill="#05060c">V3 RMS</text><text transform="translate(678.21,382.20) scale(0.9935,1)" font-size="16.6" fill="#101028">10.03</text><text transform="translate(742.42,378.80) scale(0.9414,1)" font-size="11.7" font-weight="bold" fill="#000">-120.9</text><text transform="translate(802.81,355.20) scale(0.9774,1)" font-size="11.86" font-weight="bold" fill="#05060c">A3 RMS</text><text transform="translate(807.10,381.20) scale(0.9935,1)" font-size="16.6" fill="#101028">0.97</text><text transform="translate(867.62,378.40) scale(0.9414,1)" font-size="11.7" font-weight="bold" fill="#000">-166.6</text><text transform="translate(937.59,356.20) scale(1.0197,1)" font-size="11.57" font-weight="bold" fill="#05060c">Ch3 Watts</text><text transform="translate(942.41,381.40) scale(0.9935,1)" font-size="16.6" fill="#101028">7.0</text><text transform="translate(686.69,415.90) scale(1.0127,1)" font-size="13.86" font-weight="bold" fill="#05060c">Avg Volts</text><text transform="translate(691.55,444.80) scale(1.0524,1)" font-size="16.57" font-weight="bold" fill="#000">10.05</text><text transform="translate(815.30,413.70) scale(1.0098,1)" font-size="14.57" font-weight="bold" fill="#05060c">Avg Amps</text><text transform="translate(822.74,444.80) scale(1.0586,1)" font-size="16.57" font-weight="bold" fill="#000">1.10</text><text transform="translate(930.09,415.40) scale(1.0318,1)" font-size="14.43" font-weight="bold" fill="#05060c">Tot Power</text><text transform="translate(941.94,444.70) scale(1.1075,1)" font-size="16.29" font-weight="bold" fill="#000">28.8</text><text transform="translate(681.72,505.00) scale(0.9555,1)" font-size="12.0" font-weight="bold" fill="#7a7a7a">Sampling Period (mS)</text><text transform="translate(684.35,553.00) scale(0.8922,1)" font-size="12.57" font-weight="bold" fill="#7a7a7a">0.1</text><text x="756.75" y="553.00" font-size="12.6" font-weight="bold" fill="#7a7a7a">1</text><text x="821.05" y="553.00" font-size="12.6" font-weight="bold" fill="#7a7a7a">10</text><text x="885.25" y="553.00" font-size="12.6" font-weight="bold" fill="#7a7a7a">100</text><text x="970.03" y="553.00" font-size="12.6" font-weight="bold" fill="#7a7a7a">2000</text><text transform="translate(688.29,587.80) scale(1.0177,1)" font-size="11.86" font-weight="bold" fill="#05060c">Filter</text><text transform="translate(696.08,611.80) scale(0.8445,1)" font-size="12.43" font-weight="bold" fill="#05060c">OFF</text><text transform="translate(762.83,583.00) scale(0.9349,1)" font-size="12.57" font-weight="bold" fill="#7a7a7a">Cutoff Frequency (Hz)</text><text x="752.15" y="638.70" font-size="12.6" font-weight="bold" fill="#7a7a7a">100</text><text x="823.75" y="638.70" font-size="12.6" font-weight="bold" fill="#7a7a7a">1000</text><text x="895.35" y="638.70" font-size="12.6" font-weight="bold" fill="#7a7a7a">10000</text><text x="966.95" y="638.70" font-size="12.6" font-weight="bold" fill="#7a7a7a">100000</text><text transform="translate(147.93,731.00) scale(0.8505,1)" font-size="14.29" font-weight="bold" fill="#ff0000">Pause</text><text transform="translate(270.83,723.10) scale(0.9015,1)" font-size="11.57" font-weight="bold" fill="#05060c">Save</text><text transform="translate(270.75,735.90) scale(0.9426,1)" font-size="11.57" font-weight="bold" fill="#05060c">Data</text><text x="369.80" y="749.60" font-size="12.0" fill="#101028">1</text><text x="407.50" y="749.60" font-size="12.0" fill="#101028">10</text><text x="453.32" y="749.60" font-size="12.0" fill="#101028">20</text><text x="499.03" y="749.60" font-size="12.0" fill="#101028">30</text><text x="544.80" y="749.60" font-size="12.0" fill="#101028">40</text><text transform="translate(571.71,720.30) scale(0.9777,1)" font-size="11.86" font-weight="bold" fill="#05060c">Zoom</text><text x="653.20" y="747.00" font-size="11.57" fill="#101028">0</text><text x="686.02" y="747.00" font-size="11.57" fill="#101028">0.2</text><text x="723.54" y="747.00" font-size="11.57" fill="#101028">0.4</text><text x="761.21" y="747.00" font-size="11.57" fill="#101028">0.6</text><text x="798.83" y="747.00" font-size="11.57" fill="#101028">0.8</text><text x="841.10" y="747.00" font-size="11.57" fill="#101028">1</text><text transform="translate(860.67,720.20) scale(0.9170,1)" font-size="12.0" font-weight="bold" fill="#05060c">Position</text></svg></body></html>
